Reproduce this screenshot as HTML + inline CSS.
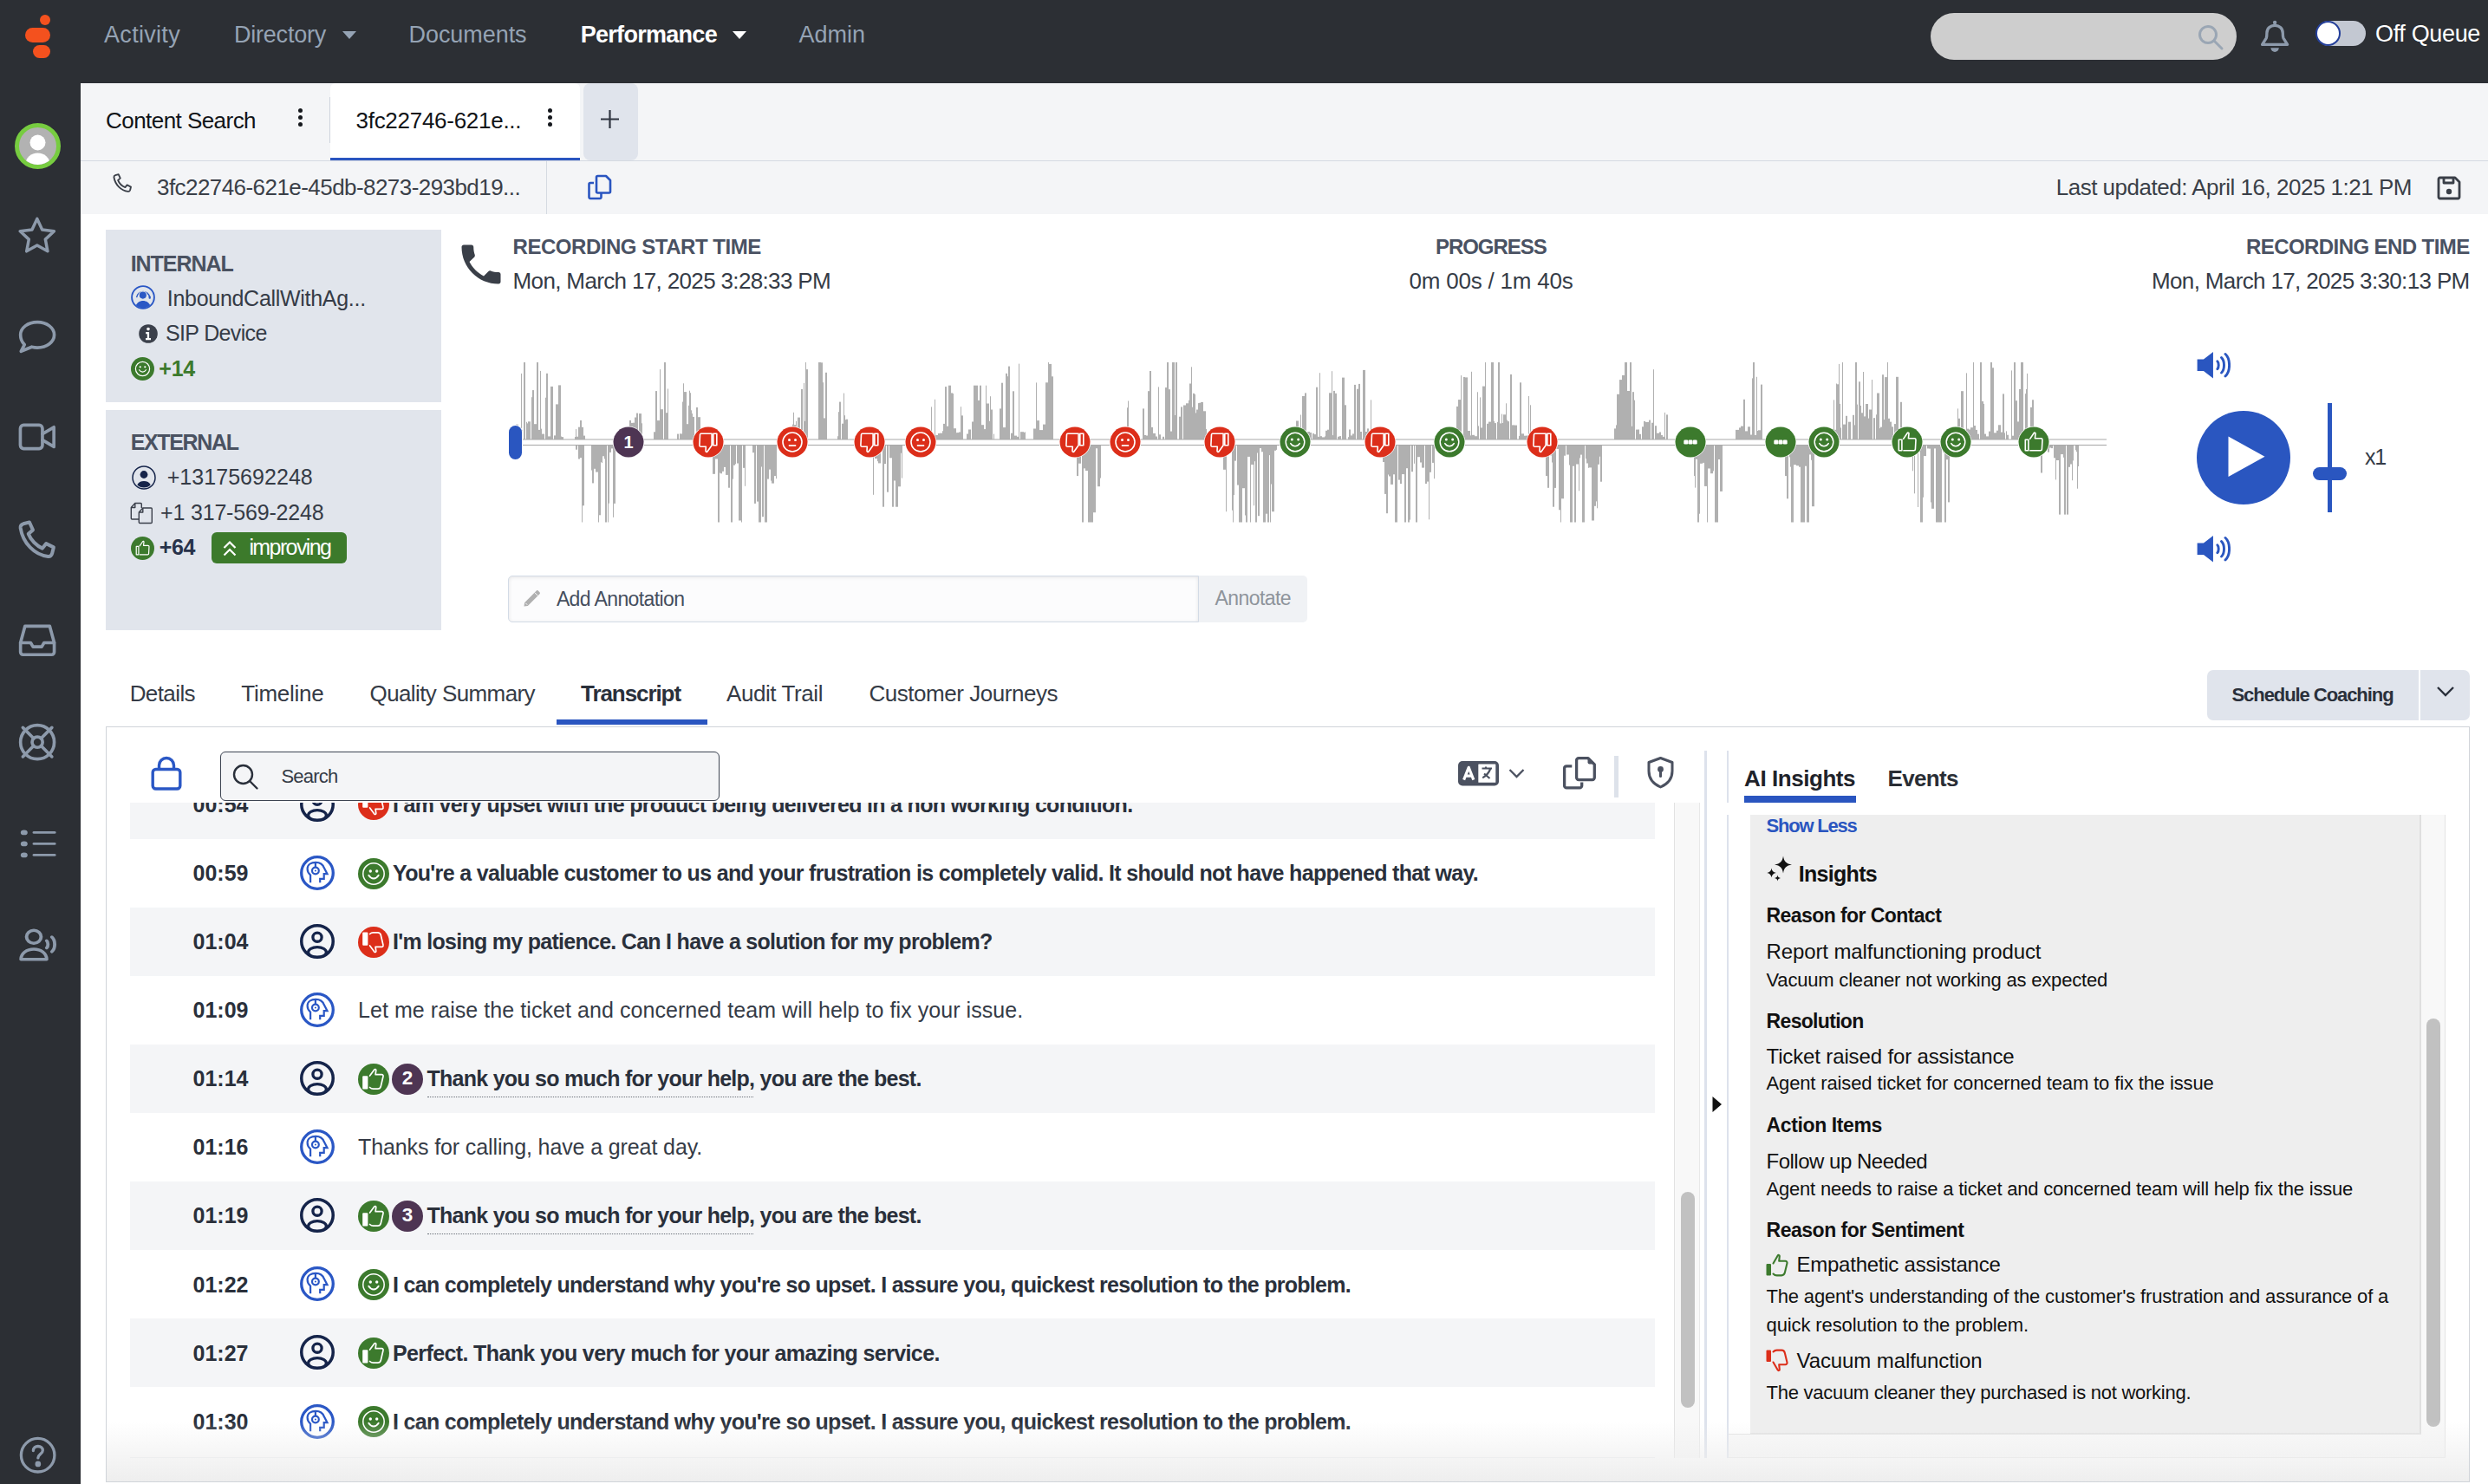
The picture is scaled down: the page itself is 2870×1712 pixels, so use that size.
<!DOCTYPE html>
<html><head><meta charset="utf-8"><style>*{box-sizing:border-box;margin:0;padding:0}
html,body{width:2870px;height:1712px;overflow:hidden;background:#fff;font-family:"Liberation Sans",sans-serif}
.a{position:absolute;white-space:nowrap}</style></head><body>
<div class="a" style="left:0px;top:0px;width:2870px;height:96px;background:#2c2f34;"></div>
<div class="a" style="left:0px;top:0px;width:93px;height:1712px;background:#2c2f34;"></div>
<div class="a" style="left:46px;top:17px;width:12px;height:12px;background:#f4511e;border-radius:6px"></div>
<div class="a" style="left:29px;top:32px;width:29px;height:17px;background:#f4511e;border-radius:8.5px"></div>
<div class="a" style="left:38px;top:52px;width:20px;height:15px;background:#f4511e;border-radius:7.5px"></div>
<div class="a" style="left:120.0px;top:27.1px;font-size:27px;line-height:27px;color:#95a3b4;letter-spacing:0.311px;">Activity</div>
<div class="a" style="left:270.0px;top:27.1px;font-size:27px;line-height:27px;color:#95a3b4;letter-spacing:-0.223px;">Directory</div>
<svg class="a" style="left:394.6px;top:36px;" width="16" height="9" viewBox="0 0 16 9"><path d="M0 0h16L8 9z" fill="#95a3b4"/></svg>
<div class="a" style="left:471.5px;top:27.1px;font-size:27px;line-height:27px;color:#95a3b4;letter-spacing:-0.061px;">Documents</div>
<div class="a" style="left:669.7px;top:27.1px;font-size:27px;line-height:27px;color:#fff;font-weight:bold;letter-spacing:-0.706px;">Performance</div>
<svg class="a" style="left:844.7px;top:36px;" width="16" height="9" viewBox="0 0 16 9"><path d="M0 0h16L8 9z" fill="#fff"/></svg>
<div class="a" style="left:921.6px;top:27.1px;font-size:27px;line-height:27px;color:#95a3b4;letter-spacing:-0.006px;">Admin</div>
<div class="a" style="left:2227px;top:15px;width:353px;height:54px;background:#cecece;border-radius:27px"></div>
<svg class="a" style="left:2534px;top:27px;" width="32" height="32" viewBox="0 0 32 32"><g fill="none" stroke="#9aa6b4" stroke-width="3"><circle cx="13" cy="13" r="9.5"/><path d="M20 20l9 9" stroke-linecap="round"/></g></svg>
<svg class="a" style="left:2596px;top:14px;" width="60" height="60" viewBox="0 0 60 60"><path d="M13.6 37.4l4.7-7.6c.5-1.6.6-3.8.6-5.6 0-5.3 3.8-8.9 9.2-8.9s9.2 3.6 9.2 8.9c0 1.8.1 4 .6 5.6l4.7 7.6z" fill="none" stroke="#8d9aab" stroke-width="3.3" stroke-linejoin="round"/><circle cx="28.1" cy="12" r="2.2" fill="#8d9aab"/><path d="M23.4 41.2h9.4a4.7 4.7 0 0 1-9.4 0z" fill="#8d9aab"/></svg>
<div class="a" style="left:2672px;top:24px;width:57px;height:29px;background:#c3c8d2;border-radius:14.5px"></div>
<div class="a" style="left:2671px;top:24px;width:29px;height:29px;background:#fff;border-radius:50%;border:2.5px solid #243f9a"></div>
<div class="a" style="left:2740.0px;top:25.8px;font-size:27px;line-height:27px;color:#fff;letter-spacing:-0.341px;">Off Queue</div>
<svg class="a" style="left:17px;top:142px;" width="53" height="53" viewBox="0 0 53 53"><circle cx="26.5" cy="26.5" r="24" fill="#b2b2b2" stroke="#77cc40" stroke-width="5"/><defs><clipPath id="avc"><circle cx="26.5" cy="26.5" r="21.5"/></clipPath></defs><circle cx="26.5" cy="22.5" r="9" fill="#fff"/><ellipse cx="26.5" cy="47" rx="14" ry="12.4" fill="#fff" clip-path="url(#avc)"/></svg>
<svg class="a" style="left:19.36px;top:247.71px" width="47.63" height="48.0" viewBox="0 0 24 24" preserveAspectRatio="none"><g fill="none" stroke="#8d9aab" stroke-width="1.75" stroke-linecap="round" stroke-linejoin="round"><path d="M12 2.2l2.95 6.3 6.9.85-5.05 4.7 1.3 6.85L12 17.5l-6.1 3.4 1.3-6.85-5.05-4.7 6.9-.85z"/></g></svg>
<svg class="a" style="left:18.06px;top:363.82px" width="50.21" height="50.53" viewBox="0 0 24 24" preserveAspectRatio="none"><g fill="none" stroke="#8d9aab" stroke-width="1.75" stroke-linecap="round" stroke-linejoin="round"><path d="M12 3.6c5.2 0 9.3 3.1 9.3 7s-4.1 7-9.3 7c-1.1 0-2.1-.15-3.1-.4L3 19.6l1.9-3.6C3.6 14.7 2.7 12.8 2.7 10.6c0-3.9 4.1-7 9.3-7z"/></g></svg>
<svg class="a" style="left:18.06px;top:477.16px" width="50.21" height="53.58" viewBox="0 0 24 24" preserveAspectRatio="none"><g fill="none" stroke="#8d9aab" stroke-width="1.75" stroke-linecap="round" stroke-linejoin="round"><rect x="2.6" y="6" width="12.2" height="12.2" rx="1.8"/><path d="M14.8 10.6l6.3-3.5v10.1l-6.3-3.5"/></g></svg>
<svg class="a" style="left:15.19px;top:598.08px" width="54.64" height="56.42" viewBox="0 0 24 24" preserveAspectRatio="none"><g fill="none" stroke="#8d9aab" stroke-width="1.75" stroke-linecap="round" stroke-linejoin="round"><path d="M5.2 2.7l3.1-.8 1.8 3.8-2.3 1.9c1.2 3 4.1 5.9 7.1 7.1l1.9-2.3 3.8 1.8-.8 3.1c-.3.9-1.1 1.5-2 1.4C10.9 18 5 12.1 3.8 4.7c-.1-.9.5-1.7 1.4-2z"/></g></svg>
<svg class="a" style="left:18.06px;top:713.6px" width="50.21" height="50.04" viewBox="0 0 24 24" preserveAspectRatio="none"><g fill="none" stroke="#8d9aab" stroke-width="1.75" stroke-linecap="round" stroke-linejoin="round"><path d="M2.7 13.2L5.2 4h13.6l2.5 9.2v5.2a1.4 1.4 0 0 1-1.4 1.4H4.1a1.4 1.4 0 0 1-1.4-1.4z"/><path d="M2.7 13.2h5.6l1.3 2.2h4.8l1.3-2.2h5.6"/></g></svg>
<svg class="a" style="left:18.06px;top:831.19px" width="50.21" height="50.32" viewBox="0 0 24 24" preserveAspectRatio="none"><g fill="none" stroke="#8d9aab" stroke-width="1.75" stroke-linecap="round" stroke-linejoin="round"><circle cx="12" cy="12" r="9.3"/><circle cx="12" cy="12" r="2.9"/><path d="M4 4l5.9 5.9M20 4l-5.9 5.9M4 20l5.9-5.9M20 20l-5.9-5.9"/></g></svg>
<svg class="a" style="left:18.31px;top:954.81px" width="51.22" height="37.19" viewBox="0 0 24 24" preserveAspectRatio="none"><g fill="none" stroke="#8d9aab" stroke-width="1.75" stroke-linecap="round" stroke-linejoin="round"><path d="M10 3.5h11M10 11.9h11M10 20.3h11"/><circle cx="4.6" cy="3.5" r="1" fill="#8d9aab"/><circle cx="4.6" cy="11.9" r="1" fill="#8d9aab"/><circle cx="4.6" cy="20.3" r="1" fill="#8d9aab"/></g></svg>
<svg class="a" style="left:17.85px;top:1068.41px" width="53.07" height="47.17" viewBox="0 0 24 24" preserveAspectRatio="none"><g fill="none" stroke="#8d9aab" stroke-width="1.75" stroke-linecap="round" stroke-linejoin="round"><circle cx="9.5" cy="6.5" r="3.8"/><path d="M2.8 19.7c0-3.5 3-6 6.7-6s6.7 2.5 6.7 6z"/><path d="M16.2 8.8c.9.9.9 3.3 0 4.2M18.9 6.6c2 2 2 6.6 0 8.6"/></g></svg>
<svg class="a" style="left:20.64px;top:1655.64px" width="45.31" height="45.41" viewBox="0 0 24 24" preserveAspectRatio="none"><g fill="none" stroke="#8d9aab" stroke-width="1.75" stroke-linecap="round" stroke-linejoin="round"><circle cx="12" cy="12" r="10.2"/><path d="M9.2 9.3c0-1.7 1.3-2.7 2.9-2.7 1.7 0 2.9 1 2.9 2.5 0 2.1-2.9 2.5-2.9 4.6"/><circle cx="12.1" cy="17.4" r=".9" fill="#8d9aab"/></g></svg>
<div class="a" style="left:93px;top:96px;width:2777px;height:89px;background:#f4f5f7;"></div>
<div class="a" style="left:93px;top:185px;width:2777px;height:1px;background:#d5dae2;"></div>
<div class="a" style="left:93px;top:186px;width:2777px;height:61px;background:#f4f5f7;"></div>
<div class="a" style="left:122.0px;top:126.0px;font-size:26px;line-height:26px;color:#111418;letter-spacing:-0.547px;">Content Search</div>
<div class="a" style="left:343.8px;top:124.8px;width:5.4px;height:5.4px;background:#15181d;border-radius:50%"></div>
<div class="a" style="left:343.8px;top:132.70000000000002px;width:5.4px;height:5.4px;background:#15181d;border-radius:50%"></div>
<div class="a" style="left:343.8px;top:140.60000000000002px;width:5.4px;height:5.4px;background:#15181d;border-radius:50%"></div>
<div class="a" style="left:631.6999999999999px;top:124.8px;width:5.4px;height:5.4px;background:#15181d;border-radius:50%"></div>
<div class="a" style="left:631.6999999999999px;top:132.70000000000002px;width:5.4px;height:5.4px;background:#15181d;border-radius:50%"></div>
<div class="a" style="left:631.6999999999999px;top:140.60000000000002px;width:5.4px;height:5.4px;background:#15181d;border-radius:50%"></div>
<div class="a" style="left:380px;top:112px;width:1px;height:53px;background:#cfd5de;"></div>
<div class="a" style="left:381px;top:96px;width:288px;height:89px;background:#fff;border-radius:6px 6px 0 0"></div>
<div class="a" style="left:381px;top:182px;width:288px;height:3px;background:#2a55c0;"></div>
<div class="a" style="left:410.5px;top:126.2px;font-size:26px;line-height:26px;color:#111418;letter-spacing:-0.277px;">3fc22746-621e...</div>
<div class="a" style="left:631.6999999999999px;top:124.8px;width:5.4px;height:5.4px;background:#15181d;border-radius:50%"></div>
<div class="a" style="left:631.6999999999999px;top:132.70000000000002px;width:5.4px;height:5.4px;background:#15181d;border-radius:50%"></div>
<div class="a" style="left:631.6999999999999px;top:140.60000000000002px;width:5.4px;height:5.4px;background:#15181d;border-radius:50%"></div>
<div class="a" style="left:673px;top:96px;width:63px;height:88.5px;background:#e0e4ec;border-radius:8px"></div>
<svg class="a" style="left:692px;top:126px;" width="23" height="23" viewBox="0 0 23 23"><path d="M11.5 1v21M1 11.5h21" stroke="#2f3540" stroke-width="2.2"/></svg>
<svg class="a" style="left:127px;top:199px;" width="28" height="28" viewBox="0 0 24 24"><path d="M5.2 2.7l3.1-.8 1.8 3.8-2.3 1.9c1.2 3 4.1 5.9 7.1 7.1l1.9-2.3 3.8 1.8-.8 3.1c-.3.9-1.1 1.5-2 1.4C10.9 18 5 12.1 3.8 4.7c-.1-.9.5-1.7 1.4-2z" fill="none" stroke="#3a3f48" stroke-width="1.6" stroke-linejoin="round"/></svg>
<div class="a" style="left:181.0px;top:203.0px;font-size:26px;line-height:26px;color:#3a3f48;letter-spacing:-0.558px;">3fc22746-621e-45db-8273-293bd19...</div>
<div class="a" style="left:630px;top:186px;width:1px;height:61px;background:#d5dae2;"></div>
<svg class="a" style="left:677px;top:201px;" width="30" height="30" viewBox="0 0 30 30"><g fill="none" stroke="#2a55c0" stroke-width="2.6" stroke-linejoin="round"><path d="M8 10H4a1.5 1.5 0 0 0-1.5 1.5v15A1.5 1.5 0 0 0 4 28h11a1.5 1.5 0 0 0 1.5-1.5V22"/><path d="M11 3.5A1.5 1.5 0 0 1 12.5 2h9.5l5 5v13a1.5 1.5 0 0 1-1.5 1.5h-13A1.5 1.5 0 0 1 11 20z"/></g></svg>
<div class="a" style="left:2371.7px;top:203.0px;font-size:26px;line-height:26px;color:#3a3f48;letter-spacing:-0.487px;">Last updated: April 16, 2025 1:21 PM</div>
<svg class="a" style="left:2809px;top:201px;" width="32" height="32" viewBox="0 0 32 32"><g fill="none" stroke="#3a3f48" stroke-width="2.8" stroke-linejoin="round"><path d="M4 5.5A1.5 1.5 0 0 1 5.5 4h17.5l5 5v17.5a1.5 1.5 0 0 1-1.5 1.5h-21A1.5 1.5 0 0 1 4 26.5z"/><path d="M10 4v6h11V4"/></g><circle cx="16" cy="20" r="3.2" fill="#3a3f48"/></svg>
<div class="a" style="left:122px;top:265px;width:387px;height:199px;background:#e1e5ec;"></div>
<div class="a" style="left:122px;top:473px;width:387px;height:254px;background:#e1e5ec;"></div>
<div class="a" style="left:150.7px;top:291.8px;font-size:25px;line-height:25px;color:#4a5261;font-weight:bold;letter-spacing:-1.047px;">INTERNAL</div>
<svg class="a" style="left:151px;top:329px;" width="28" height="28" viewBox="0 0 28 28"><circle cx="14" cy="14" r="12.9" fill="none" stroke="#2a57c5" stroke-width="1.9"/><defs><clipPath id="agc"><circle cx="14" cy="14" r="12.2"/></clipPath></defs><path d="M6.6 14.2A7.6 7.6 0 0 1 21.6 13.6" fill="none" stroke="#2a57c5" stroke-width="1.4"/><circle cx="13.8" cy="11.6" r="4.6" fill="#2a57c5" stroke="#e1e5ec" stroke-width="1.1"/><rect x="20.6" y="12.6" width="2.2" height="3.2" rx="0.8" fill="#2a57c5"/><path d="M5.8 23.5c1.2-3.5 4.4-5.6 8.2-5.6s7 2.1 8.2 5.6V28H5.8z" fill="#2a57c5" clip-path="url(#agc)"/></svg>
<div class="a" style="left:192.8px;top:331.7px;font-size:25px;line-height:25px;color:#353b46;letter-spacing:-0.292px;">InboundCallWithAg...</div>
<svg class="a" style="left:159.7px;top:374px;" width="22" height="22" viewBox="0 0 22 22"><circle cx="11" cy="11" r="10.8" fill="#3b404b"/><circle cx="11" cy="5.6" r="1.8" fill="#fff"/><path d="M8.2 9h3.9v7h1.9v2.2H8v-2.2h1.8v-4.8H8.2z" fill="#fff"/></svg>
<div class="a" style="left:191.0px;top:371.5px;font-size:25px;line-height:25px;color:#353b46;letter-spacing:-0.650px;">SIP Device</div>
<svg class="a" style="left:151px;top:412px;" width="27" height="27" viewBox="0 0 36 36"><circle cx="18" cy="18" r="18" fill="#3c7a2d"/><circle cx="18" cy="18" r="10.8" fill="none" stroke="#fff" stroke-width="1.6"/><circle cx="14.3" cy="15" r="1.5" fill="#fff"/><circle cx="21.7" cy="15" r="1.5" fill="#fff"/><path d="M12.8 19.6c1.4 2.2 3.2 3.2 5.2 3.2s3.8-1 5.2-3.2" fill="none" stroke="#fff" stroke-width="1.6" stroke-linecap="round"/></svg>
<div class="a" style="left:183.3px;top:412.6px;font-size:25px;line-height:25px;color:#3c7a2d;font-weight:bold;letter-spacing:-0.235px;">+14</div>
<div class="a" style="left:150.7px;top:498.2px;font-size:25px;line-height:25px;color:#4a5261;font-weight:bold;letter-spacing:-1.341px;">EXTERNAL</div>
<svg class="a" style="left:151.5px;top:536.5px;" width="28" height="28" viewBox="0 0 28 28"><circle cx="14" cy="14" r="13" fill="none" stroke="#15244a" stroke-width="1.5"/><circle cx="14" cy="10.5" r="4.4" fill="#15244a"/><path d="M6.3 22.3c1.2-2.9 4.2-4.3 7.7-4.3s6.5 1.4 7.7 4.3C19.8 24.4 17.1 25.6 14 25.6s-5.8-1.2-7.7-3.3z" fill="#15244a"/></svg>
<div class="a" style="left:192.7px;top:537.6px;font-size:25px;line-height:25px;color:#353b46;letter-spacing:0.048px;">+13175692248</div>
<svg class="a" style="left:150px;top:578px;" width="27" height="27" viewBox="0 0 27 27"><g fill="none" stroke="#3a3f4a" stroke-width="1.4" stroke-linejoin="round"><path d="M1.3 20V7.5l4.5-5h6.5c.6 0 1 .4 1 1V8"/><path d="M1.3 7.5h4.5v-5"/><path d="M10.3 24.5V13l4.5-5h9.5c.6 0 1 .4 1 1v15.5c0 .6-.4 1-1 1h-13c-.6 0-1-.4-1-1z"/><path d="M10.3 13h4.5V8"/><path d="M1.3 20c0 .6.4 1 1 1h8"/></g></svg>
<div class="a" style="left:185.0px;top:578.6px;font-size:25px;line-height:25px;color:#353b46;letter-spacing:-0.175px;">+1 317-569-2248</div>
<svg class="a" style="left:151px;top:619px;" width="27" height="27" viewBox="0 0 36 36"><circle cx="18" cy="18" r="18" fill="#3c7a2d"/><g fill="none" stroke="#fff" stroke-width="1.6" stroke-linejoin="round"><path d="M13.3 27.7h12.4c1.1 0 1.7-.6 1.7-1.5l.6-10.8c0-1-.6-1.6-1.6-1.6h-7l.6-5.6c.1-1.1-1.3-1.4-1.9-.5l-4.8 7.2"/><path d="M8.3 15.2h3.6v12.5H8.3z"/></g></svg>
<div class="a" style="left:183.7px;top:618.6px;font-size:25px;line-height:25px;color:#27324a;font-weight:bold;letter-spacing:-0.369px;">+64</div>
<div class="a" style="left:244px;top:614px;width:156px;height:36px;background:#3c7a2b;border-radius:6px"></div>
<svg class="a" style="left:257px;top:623px;" width="16" height="19" viewBox="0 0 16 19"><path d="M1.5 9L8 2.5 14.5 9M1.5 17.5L8 11l6.5 6.5" fill="none" stroke="#fff" stroke-width="2.2"/></svg>
<div class="a" style="left:287.4px;top:618.6px;font-size:25px;line-height:25px;color:#fff;letter-spacing:-1.596px;">improving</div>
<svg class="a" style="left:524.5px;top:274.5px;" width="60" height="60" viewBox="0 0 24 24"><path d="M6.6 10.8c1.4 2.8 3.8 5.1 6.6 6.6l2.2-2.2c.3-.3.7-.4 1-.2 1.1.4 2.3.6 3.6.6.6 0 1 .4 1 1V20c0 .6-.4 1-1 1C10.6 21 3 13.4 3 4c0-.6.4-1 1-1h3.5c.6 0 1 .4 1 1 0 1.3.2 2.5.6 3.6.1.3 0 .7-.2 1z" fill="#3a3f48" transform="rotate(0 12 12)"/></svg>
<div class="a" style="left:591.6px;top:272.7px;font-size:24px;line-height:24px;color:#4a5263;font-weight:bold;letter-spacing:-0.467px;">RECORDING START TIME</div>
<div class="a" style="left:591.6px;top:311.0px;font-size:26px;line-height:26px;color:#353b46;letter-spacing:-0.649px;">Mon, March 17, 2025 3:28:33 PM</div>
<div class="a" style="left:1656.0px;top:272.7px;font-size:24px;line-height:24px;color:#4a5263;font-weight:bold;letter-spacing:-1.054px;">PROGRESS</div>
<div class="a" style="left:1625.6px;top:311.0px;font-size:26px;line-height:26px;color:#353b46;letter-spacing:-0.219px;">0m 00s / 1m 40s</div>
<div class="a" style="left:2591.0px;top:272.7px;font-size:24px;line-height:24px;color:#4a5263;font-weight:bold;letter-spacing:-0.578px;">RECORDING END TIME</div>
<div class="a" style="left:2482.0px;top:311.0px;font-size:26px;line-height:26px;color:#353b46;letter-spacing:-0.642px;">Mon, March 17, 2025 3:30:13 PM</div>
<svg class="a" style="left:0;top:0" width="2870" height="700" viewBox="0 0 2870 700"><g fill="#b0b0b0"><rect x="595" y="489.6" width="3" height="17.4"/><rect x="598" y="499.0" width="2" height="8.0"/><rect x="601" y="430.9" width="1" height="76.1"/><rect x="602" y="496.2" width="1" height="10.8"/><rect x="604" y="418.0" width="2" height="89.0"/><rect x="607" y="486.8" width="1" height="20.2"/><rect x="608" y="488.4" width="1" height="18.6"/><rect x="609" y="486.3" width="3" height="20.7"/><rect x="613" y="458.2" width="1" height="48.8"/><rect x="614" y="450.1" width="2" height="56.9"/><rect x="616" y="489.2" width="3" height="17.8"/><rect x="619" y="418.0" width="2" height="89.0"/><rect x="621" y="495.9" width="2" height="11.1"/><rect x="623" y="427.9" width="1" height="79.1"/><rect x="624" y="494.6" width="1" height="12.4"/><rect x="625" y="500.6" width="3" height="6.4"/><rect x="629" y="458.7" width="1" height="48.3"/><rect x="630" y="430.8" width="2" height="76.2"/><rect x="632" y="503.4" width="3" height="3.6"/><rect x="635" y="445.9" width="3" height="61.1"/><rect x="639" y="502.4" width="2" height="4.6"/><rect x="641" y="466.4" width="3" height="40.6"/><rect x="644" y="444.4" width="3" height="62.6"/><rect x="647" y="503.5" width="1" height="3.5"/><rect x="648" y="504.1" width="2" height="2.9"/><rect x="663" y="504.0" width="1" height="3.0"/><rect x="664" y="495.1" width="1" height="11.9"/><rect x="665" y="503.7" width="2" height="3.3"/><rect x="667" y="492.7" width="2" height="14.3"/><rect x="669" y="485.0" width="2" height="22.0"/><rect x="671" y="492.8" width="2" height="14.2"/><rect x="673" y="502.6" width="2" height="4.4"/><rect x="726" y="484.9" width="2" height="22.1"/><rect x="728" y="487.9" width="2" height="19.1"/><rect x="730" y="487.7" width="2" height="19.3"/><rect x="732" y="481.5" width="2" height="25.5"/><rect x="734" y="476.6" width="2" height="30.4"/><rect x="737" y="477.1" width="3" height="29.9"/><rect x="740" y="488.3" width="1" height="18.7"/><rect x="754" y="498.3" width="2" height="8.7"/><rect x="756" y="451.1" width="2" height="55.9"/><rect x="758" y="485.1" width="3" height="21.9"/><rect x="761" y="426.1" width="1" height="80.9"/><rect x="762" y="472.2" width="3" height="34.8"/><rect x="766" y="418.0" width="2" height="89.0"/><rect x="768" y="476.2" width="2" height="30.8"/><rect x="770" y="448.5" width="1" height="58.5"/><rect x="781" y="500.6" width="2" height="6.4"/><rect x="784" y="500.2" width="1" height="6.8"/><rect x="785" y="500.4" width="2" height="6.6"/><rect x="787" y="463.5" width="1" height="43.5"/><rect x="788" y="442.3" width="1" height="64.7"/><rect x="789" y="452.1" width="3" height="54.9"/><rect x="792" y="489.2" width="2" height="17.8"/><rect x="794" y="467.8" width="1" height="39.2"/><rect x="795" y="450.7" width="1" height="56.3"/><rect x="796" y="453.2" width="1" height="53.8"/><rect x="797" y="473.3" width="1" height="33.7"/><rect x="798" y="477.0" width="1" height="30.0"/><rect x="799" y="480.9" width="2" height="26.1"/><rect x="803" y="470.0" width="2" height="37.0"/><rect x="805" y="481.2" width="3" height="25.8"/><rect x="914" y="489.6" width="1" height="17.4"/><rect x="915" y="475.8" width="1" height="31.2"/><rect x="916" y="490.2" width="2" height="16.8"/><rect x="918" y="485.8" width="1" height="21.2"/><rect x="920" y="481.6" width="3" height="25.4"/><rect x="924" y="449.0" width="2" height="58.0"/><rect x="927" y="441.9" width="1" height="65.1"/><rect x="928" y="485.8" width="1" height="21.2"/><rect x="929" y="418.0" width="1" height="89.0"/><rect x="930" y="426.1" width="2" height="80.9"/><rect x="944" y="418.0" width="1" height="89.0"/><rect x="945" y="418.0" width="1" height="89.0"/><rect x="946" y="418.0" width="1" height="89.0"/><rect x="947" y="418.3" width="2" height="88.7"/><rect x="949" y="441.2" width="1" height="65.8"/><rect x="950" y="482.4" width="2" height="24.6"/><rect x="952" y="429.8" width="2" height="77.2"/><rect x="966" y="503.2" width="1" height="3.8"/><rect x="967" y="475.2" width="1" height="31.8"/><rect x="968" y="463.6" width="2" height="43.4"/><rect x="971" y="488.7" width="2" height="18.3"/><rect x="973" y="453.6" width="1" height="53.4"/><rect x="974" y="479.2" width="1" height="27.8"/><rect x="975" y="484.2" width="1" height="22.8"/><rect x="976" y="483.7" width="2" height="23.3"/><rect x="1067" y="502.6" width="2" height="4.4"/><rect x="1070" y="499.7" width="2" height="7.3"/><rect x="1072" y="502.3" width="2" height="4.7"/><rect x="1074" y="469.4" width="1" height="37.6"/><rect x="1075" y="504.9" width="1" height="2.1"/><rect x="1076" y="504.5" width="2" height="2.5"/><rect x="1078" y="460.8" width="1" height="46.2"/><rect x="1079" y="502.0" width="3" height="5.0"/><rect x="1082" y="500.0" width="2" height="7.0"/><rect x="1084" y="499.7" width="3" height="7.3"/><rect x="1087" y="497.2" width="1" height="9.8"/><rect x="1088" y="488.9" width="2" height="18.1"/><rect x="1090" y="446.1" width="2" height="60.9"/><rect x="1092" y="491.7" width="2" height="15.3"/><rect x="1094" y="444.7" width="3" height="62.3"/><rect x="1097" y="453.4" width="2" height="53.6"/><rect x="1099" y="454.0" width="1" height="53.0"/><rect x="1100" y="494.2" width="3" height="12.8"/><rect x="1103" y="499.2" width="1" height="7.8"/><rect x="1104" y="499.1" width="2" height="7.9"/><rect x="1106" y="498.5" width="2" height="8.5"/><rect x="1108" y="469.2" width="1" height="37.8"/><rect x="1109" y="479.4" width="2" height="27.6"/><rect x="1115" y="500.5" width="2" height="6.5"/><rect x="1117" y="495.5" width="3" height="11.5"/><rect x="1121" y="486.5" width="2" height="20.5"/><rect x="1123" y="444.7" width="2" height="62.3"/><rect x="1125" y="444.7" width="3" height="62.3"/><rect x="1128" y="461.9" width="2" height="45.1"/><rect x="1130" y="444.7" width="2" height="62.3"/><rect x="1132" y="490.2" width="3" height="16.8"/><rect x="1135" y="495.1" width="2" height="11.9"/><rect x="1137" y="444.7" width="1" height="62.3"/><rect x="1138" y="465.5" width="3" height="41.5"/><rect x="1141" y="485.8" width="1" height="21.2"/><rect x="1142" y="457.2" width="1" height="49.8"/><rect x="1143" y="472.5" width="2" height="34.5"/><rect x="1146" y="500.6" width="1" height="6.4"/><rect x="1153" y="471.4" width="2" height="35.6"/><rect x="1155" y="441.7" width="2" height="65.3"/><rect x="1157" y="493.1" width="3" height="13.9"/><rect x="1160" y="430.8" width="2" height="76.2"/><rect x="1162" y="434.2" width="1" height="72.8"/><rect x="1163" y="422.6" width="2" height="84.4"/><rect x="1166" y="499.7" width="2" height="7.3"/><rect x="1168" y="451.3" width="2" height="55.7"/><rect x="1170" y="502.6" width="3" height="4.4"/><rect x="1173" y="503.8" width="2" height="3.2"/><rect x="1175" y="419.6" width="1" height="87.4"/><rect x="1177" y="498.2" width="2" height="8.8"/><rect x="1179" y="498.2" width="2" height="8.8"/><rect x="1181" y="498.9" width="1" height="8.1"/><rect x="1182" y="498.4" width="1" height="8.6"/><rect x="1192" y="494.5" width="3" height="12.5"/><rect x="1195" y="441.4" width="1" height="65.6"/><rect x="1196" y="485.1" width="3" height="21.9"/><rect x="1199" y="496.1" width="2" height="10.9"/><rect x="1201" y="496.1" width="2" height="10.9"/><rect x="1203" y="489.6" width="3" height="17.4"/><rect x="1206" y="441.3" width="3" height="65.7"/><rect x="1209" y="418.0" width="1" height="89.0"/><rect x="1210" y="420.0" width="1" height="87.0"/><rect x="1211" y="419.9" width="2" height="87.1"/><rect x="1213" y="434.3" width="2" height="72.7"/><rect x="1298" y="495.4" width="2" height="11.6"/><rect x="1300" y="470.3" width="1" height="36.7"/><rect x="1301" y="462.5" width="1" height="44.5"/><rect x="1302" y="505.3" width="2" height="1.7"/><rect x="1318" y="471.4" width="2" height="35.6"/><rect x="1320" y="502.0" width="2" height="5.0"/><rect x="1322" y="502.5" width="2" height="4.5"/><rect x="1324" y="451.2" width="2" height="55.8"/><rect x="1326" y="428.0" width="2" height="79.0"/><rect x="1328" y="492.9" width="2" height="14.1"/><rect x="1330" y="499.9" width="3" height="7.1"/><rect x="1333" y="503.5" width="2" height="3.5"/><rect x="1336" y="446.4" width="1" height="60.6"/><rect x="1337" y="501.3" width="2" height="5.7"/><rect x="1341" y="503.8" width="2" height="3.2"/><rect x="1344" y="447.1" width="2" height="59.9"/><rect x="1346" y="418.0" width="2" height="89.0"/><rect x="1348" y="449.2" width="2" height="57.8"/><rect x="1350" y="497.6" width="2" height="9.4"/><rect x="1352" y="418.0" width="3" height="89.0"/><rect x="1355" y="479.0" width="1" height="28.0"/><rect x="1356" y="418.0" width="2" height="89.0"/><rect x="1360" y="480.7" width="2" height="26.3"/><rect x="1362" y="469.4" width="2" height="37.6"/><rect x="1365" y="467.5" width="3" height="39.5"/><rect x="1368" y="465.3" width="3" height="41.7"/><rect x="1371" y="461.8" width="1" height="45.2"/><rect x="1372" y="442.5" width="2" height="64.5"/><rect x="1374" y="423.3" width="1" height="83.7"/><rect x="1375" y="469.7" width="1" height="37.3"/><rect x="1376" y="453.8" width="2" height="53.2"/><rect x="1378" y="454.9" width="1" height="52.1"/><rect x="1379" y="476.4" width="1" height="30.6"/><rect x="1380" y="472.5" width="2" height="34.5"/><rect x="1382" y="465.1" width="1" height="41.9"/><rect x="1383" y="464.8" width="2" height="42.2"/><rect x="1385" y="463.9" width="3" height="43.1"/><rect x="1388" y="474.3" width="3" height="32.7"/><rect x="1391" y="495.0" width="1" height="12.0"/><rect x="1494" y="500.1" width="1" height="6.9"/><rect x="1495" y="485.5" width="3" height="21.5"/><rect x="1498" y="492.8" width="2" height="14.2"/><rect x="1500" y="478.5" width="1" height="28.5"/><rect x="1502" y="457.0" width="3" height="50.0"/><rect x="1505" y="453.4" width="2" height="53.6"/><rect x="1508" y="498.0" width="3" height="9.0"/><rect x="1511" y="499.0" width="2" height="8.0"/><rect x="1514" y="500.1" width="2" height="6.9"/><rect x="1516" y="501.1" width="2" height="5.9"/><rect x="1518" y="446.7" width="2" height="60.3"/><rect x="1520" y="503.8" width="2" height="3.2"/><rect x="1522" y="430.2" width="1" height="76.8"/><rect x="1523" y="503.2" width="2" height="3.8"/><rect x="1525" y="504.4" width="3" height="2.6"/><rect x="1528" y="503.4" width="1" height="3.6"/><rect x="1529" y="496.8" width="2" height="10.2"/><rect x="1531" y="495.7" width="2" height="11.3"/><rect x="1533" y="453.3" width="3" height="53.7"/><rect x="1536" y="428.2" width="1" height="78.8"/><rect x="1537" y="502.1" width="1" height="4.9"/><rect x="1538" y="450.9" width="2" height="56.1"/><rect x="1540" y="453.8" width="2" height="53.2"/><rect x="1543" y="503.7" width="2" height="3.3"/><rect x="1545" y="503.1" width="2" height="3.9"/><rect x="1548" y="435.6" width="3" height="71.4"/><rect x="1551" y="467.3" width="2" height="39.7"/><rect x="1555" y="504.2" width="1" height="2.8"/><rect x="1556" y="495.5" width="2" height="11.5"/><rect x="1558" y="502.4" width="2" height="4.6"/><rect x="1560" y="500.4" width="2" height="6.6"/><rect x="1562" y="443.9" width="2" height="63.1"/><rect x="1565" y="448.7" width="2" height="58.3"/><rect x="1567" y="442.9" width="2" height="64.1"/><rect x="1569" y="498.0" width="2" height="9.0"/><rect x="1572" y="426.9" width="3" height="80.1"/><rect x="1575" y="498.0" width="2" height="9.0"/><rect x="1577" y="494.4" width="2" height="12.6"/><rect x="1579" y="497.5" width="2" height="9.5"/><rect x="1581" y="461.4" width="1" height="45.6"/><rect x="1583" y="504.5" width="2" height="2.5"/><rect x="1585" y="504.1" width="2" height="2.9"/><rect x="1678" y="499.3" width="2" height="7.7"/><rect x="1680" y="468.9" width="2" height="38.1"/><rect x="1682" y="461.1" width="3" height="45.9"/><rect x="1685" y="433.1" width="1" height="73.9"/><rect x="1686" y="502.8" width="2" height="4.2"/><rect x="1688" y="435.0" width="2" height="72.0"/><rect x="1690" y="435.4" width="3" height="71.6"/><rect x="1693" y="497.0" width="3" height="10.0"/><rect x="1696" y="502.4" width="1" height="4.6"/><rect x="1697" y="428.8" width="1" height="78.2"/><rect x="1698" y="501.8" width="3" height="5.2"/><rect x="1701" y="503.2" width="3" height="3.8"/><rect x="1704" y="452.3" width="1" height="54.7"/><rect x="1705" y="491.4" width="1" height="15.6"/><rect x="1707" y="458.4" width="1" height="48.6"/><rect x="1708" y="493.4" width="2" height="13.6"/><rect x="1710" y="445.6" width="3" height="61.4"/><rect x="1713" y="418.0" width="1" height="89.0"/><rect x="1715" y="488.8" width="2" height="18.2"/><rect x="1717" y="486.6" width="3" height="20.4"/><rect x="1720" y="418.0" width="3" height="89.0"/><rect x="1723" y="485.9" width="1" height="21.1"/><rect x="1724" y="488.1" width="2" height="18.9"/><rect x="1727" y="486.8" width="1" height="20.2"/><rect x="1728" y="418.0" width="2" height="89.0"/><rect x="1730" y="488.4" width="2" height="18.6"/><rect x="1732" y="477.6" width="1" height="29.4"/><rect x="1733" y="488.0" width="1" height="19.0"/><rect x="1734" y="478.3" width="3" height="28.7"/><rect x="1737" y="465.3" width="1" height="41.7"/><rect x="1738" y="484.5" width="1" height="22.5"/><rect x="1739" y="486.1" width="2" height="20.9"/><rect x="1742" y="431.9" width="2" height="75.1"/><rect x="1744" y="490.4" width="3" height="16.6"/><rect x="1747" y="490.6" width="3" height="16.4"/><rect x="1752" y="502.9" width="1" height="4.1"/><rect x="1753" y="441.3" width="2" height="65.7"/><rect x="1755" y="500.3" width="3" height="6.7"/><rect x="1758" y="502.7" width="3" height="4.3"/><rect x="1761" y="502.4" width="2" height="4.6"/><rect x="1763" y="457.0" width="1" height="50.0"/><rect x="1764" y="499.6" width="1" height="7.4"/><rect x="1765" y="467.3" width="1" height="39.7"/><rect x="1766" y="500.6" width="2" height="6.4"/><rect x="1768" y="503.2" width="2" height="3.8"/><rect x="1862" y="494.4" width="2" height="12.6"/><rect x="1864" y="490.4" width="1" height="16.6"/><rect x="1865" y="454.8" width="3" height="52.2"/><rect x="1868" y="438.1" width="3" height="68.9"/><rect x="1871" y="432.9" width="3" height="74.1"/><rect x="1874" y="418.0" width="3" height="89.0"/><rect x="1877" y="451.0" width="3" height="56.0"/><rect x="1880" y="418.0" width="2" height="89.0"/><rect x="1882" y="491.8" width="1" height="15.2"/><rect x="1883" y="452.2" width="2" height="54.8"/><rect x="1885" y="461.7" width="1" height="45.3"/><rect x="1887" y="495.6" width="2" height="11.4"/><rect x="1889" y="495.5" width="2" height="11.5"/><rect x="1891" y="500.8" width="2" height="6.2"/><rect x="1894" y="492.3" width="2" height="14.7"/><rect x="1896" y="486.0" width="2" height="21.0"/><rect x="1898" y="487.0" width="2" height="20.0"/><rect x="1900" y="486.9" width="2" height="20.1"/><rect x="1902" y="484.6" width="2" height="22.4"/><rect x="1905" y="487.7" width="2" height="19.3"/><rect x="1907" y="426.2" width="1" height="80.8"/><rect x="1909" y="491.2" width="2" height="15.8"/><rect x="1911" y="499.7" width="3" height="7.3"/><rect x="1914" y="498.5" width="2" height="8.5"/><rect x="1916" y="501.9" width="2" height="5.1"/><rect x="1918" y="503.8" width="2" height="3.2"/><rect x="1920" y="475.9" width="1" height="31.1"/><rect x="1922" y="478.4" width="2" height="28.6"/><rect x="2002" y="495.9" width="2" height="11.1"/><rect x="2004" y="495.9" width="2" height="11.1"/><rect x="2006" y="493.4" width="2" height="13.6"/><rect x="2008" y="491.6" width="3" height="15.4"/><rect x="2011" y="460.8" width="2" height="46.2"/><rect x="2013" y="497.4" width="3" height="9.6"/><rect x="2016" y="492.3" width="3" height="14.7"/><rect x="2019" y="501.5" width="2" height="5.5"/><rect x="2021" y="436.4" width="1" height="70.6"/><rect x="2022" y="418.0" width="2" height="89.0"/><rect x="2024" y="502.0" width="2" height="5.0"/><rect x="2026" y="434.8" width="1" height="72.2"/><rect x="2027" y="497.0" width="1" height="10.0"/><rect x="2028" y="496.3" width="3" height="10.7"/><rect x="2031" y="443.6" width="2" height="63.4"/><rect x="2109" y="501.2" width="1" height="5.8"/><rect x="2110" y="498.5" width="2" height="8.5"/><rect x="2112" y="500.1" width="3" height="6.9"/><rect x="2115" y="461.4" width="1" height="45.6"/><rect x="2116" y="495.8" width="2" height="11.2"/><rect x="2118" y="442.5" width="1" height="64.5"/><rect x="2119" y="443.3" width="2" height="63.7"/><rect x="2121" y="419.9" width="1" height="87.1"/><rect x="2122" y="465.9" width="1" height="41.1"/><rect x="2123" y="493.4" width="1" height="13.6"/><rect x="2125" y="418.0" width="1" height="89.0"/><rect x="2126" y="489.6" width="3" height="17.4"/><rect x="2129" y="479.8" width="2" height="27.2"/><rect x="2132" y="486.7" width="3" height="20.3"/><rect x="2137" y="478.8" width="2" height="28.2"/><rect x="2139" y="490.4" width="1" height="16.6"/><rect x="2140" y="418.0" width="2" height="89.0"/><rect x="2142" y="466.6" width="1" height="40.4"/><rect x="2144" y="440.3" width="2" height="66.7"/><rect x="2146" y="468.0" width="1" height="39.0"/><rect x="2147" y="476.3" width="2" height="30.7"/><rect x="2149" y="429.0" width="1" height="78.0"/><rect x="2150" y="480.4" width="2" height="26.6"/><rect x="2152" y="466.0" width="3" height="41.0"/><rect x="2155" y="482.6" width="1" height="24.4"/><rect x="2156" y="472.5" width="3" height="34.5"/><rect x="2159" y="438.0" width="1" height="69.0"/><rect x="2161" y="482.2" width="2" height="24.8"/><rect x="2164" y="478.3" width="1" height="28.7"/><rect x="2165" y="453.5" width="3" height="53.5"/><rect x="2168" y="494.1" width="1" height="12.9"/><rect x="2169" y="492.6" width="2" height="14.4"/><rect x="2171" y="432.2" width="2" height="74.8"/><rect x="2173" y="484.1" width="1" height="22.9"/><rect x="2174" y="435.1" width="3" height="71.9"/><rect x="2177" y="418.0" width="1" height="89.0"/><rect x="2178" y="482.8" width="2" height="24.2"/><rect x="2180" y="486.6" width="2" height="20.4"/><rect x="2182" y="492.3" width="2" height="14.7"/><rect x="2185" y="489.1" width="2" height="17.9"/><rect x="2187" y="434.8" width="3" height="72.2"/><rect x="2190" y="499.0" width="2" height="8.0"/><rect x="2192" y="463.8" width="2" height="43.2"/><rect x="2258" y="471.4" width="1" height="35.6"/><rect x="2259" y="482.8" width="2" height="24.2"/><rect x="2261" y="496.4" width="1" height="10.6"/><rect x="2262" y="451.2" width="3" height="55.8"/><rect x="2265" y="499.7" width="3" height="7.3"/><rect x="2268" y="430.4" width="1" height="76.6"/><rect x="2269" y="494.6" width="2" height="12.4"/><rect x="2271" y="495.5" width="2" height="11.5"/><rect x="2273" y="493.2" width="3" height="13.8"/><rect x="2276" y="418.0" width="1" height="89.0"/><rect x="2277" y="491.0" width="2" height="16.0"/><rect x="2279" y="495.9" width="2" height="11.1"/><rect x="2281" y="500.7" width="2" height="6.3"/><rect x="2284" y="418.0" width="2" height="89.0"/><rect x="2286" y="462.9" width="2" height="44.1"/><rect x="2288" y="465.9" width="1" height="41.1"/><rect x="2289" y="500.6" width="2" height="6.4"/><rect x="2291" y="503.4" width="3" height="3.6"/><rect x="2294" y="497.6" width="2" height="9.4"/><rect x="2296" y="418.0" width="2" height="89.0"/><rect x="2298" y="424.3" width="2" height="82.7"/><rect x="2300" y="499.3" width="3" height="7.7"/><rect x="2303" y="496.7" width="2" height="10.3"/><rect x="2305" y="490.3" width="3" height="16.7"/><rect x="2308" y="498.6" width="2" height="8.4"/><rect x="2310" y="454.4" width="2" height="52.6"/><rect x="2312" y="499.4" width="1" height="7.6"/><rect x="2314" y="497.4" width="1" height="9.6"/><rect x="2315" y="501.7" width="2" height="5.3"/><rect x="2320" y="427.4" width="1" height="79.6"/><rect x="2321" y="502.7" width="2" height="4.3"/><rect x="2323" y="418.0" width="2" height="89.0"/><rect x="2325" y="462.2" width="2" height="44.8"/><rect x="2327" y="486.4" width="2" height="20.6"/><rect x="2329" y="449.0" width="2" height="58.0"/><rect x="2331" y="418.0" width="3" height="89.0"/><rect x="2336" y="454.2" width="1" height="52.8"/><rect x="2337" y="449.0" width="1" height="58.0"/><rect x="2338" y="430.9" width="1" height="76.1"/><rect x="2339" y="496.9" width="2" height="10.1"/><rect x="2342" y="469.9" width="2" height="37.1"/><rect x="2344" y="461.3" width="2" height="45.7"/><rect x="664" y="513.5" width="2" height="5.2"/><rect x="667" y="513.5" width="2" height="16.0"/><rect x="669" y="513.5" width="2" height="14.6"/><rect x="671" y="513.5" width="1" height="89.0"/><rect x="672" y="513.5" width="2" height="69.8"/><rect x="682" y="513.5" width="1" height="29.1"/><rect x="683" y="513.5" width="2" height="43.9"/><rect x="685" y="513.5" width="2" height="27.3"/><rect x="687" y="513.5" width="3" height="31.1"/><rect x="690" y="513.5" width="1" height="89.0"/><rect x="691" y="513.5" width="2" height="80.8"/><rect x="693" y="513.5" width="1" height="19.7"/><rect x="694" y="513.5" width="1" height="20.6"/><rect x="695" y="513.5" width="2" height="12.8"/><rect x="697" y="513.5" width="1" height="15.9"/><rect x="698" y="513.5" width="2" height="89.0"/><rect x="701" y="513.5" width="1" height="89.0"/><rect x="702" y="513.5" width="1" height="67.2"/><rect x="703" y="513.5" width="2" height="8.4"/><rect x="705" y="513.5" width="2" height="3.9"/><rect x="707" y="513.5" width="1" height="83.3"/><rect x="708" y="513.5" width="2" height="67.4"/><rect x="822" y="513.5" width="3" height="33.3"/><rect x="825" y="513.5" width="3" height="15.9"/><rect x="828" y="513.5" width="2" height="89.0"/><rect x="830" y="513.5" width="1" height="32.1"/><rect x="831" y="513.5" width="2" height="32.8"/><rect x="833" y="513.5" width="2" height="30.3"/><rect x="835" y="513.5" width="2" height="25.4"/><rect x="837" y="513.5" width="3" height="34.4"/><rect x="840" y="513.5" width="2" height="49.2"/><rect x="843" y="513.5" width="2" height="89.0"/><rect x="845" y="513.5" width="1" height="39.1"/><rect x="846" y="513.5" width="2" height="23.2"/><rect x="848" y="513.5" width="1" height="21.8"/><rect x="850" y="513.5" width="2" height="21.0"/><rect x="852" y="513.5" width="3" height="87.0"/><rect x="855" y="513.5" width="1" height="89.0"/><rect x="857" y="513.5" width="2" height="26.3"/><rect x="859" y="513.5" width="1" height="47.3"/><rect x="868" y="513.5" width="2" height="8.7"/><rect x="870" y="513.5" width="2" height="67.4"/><rect x="873" y="513.5" width="2" height="65.1"/><rect x="875" y="513.5" width="1" height="89.0"/><rect x="876" y="513.5" width="2" height="89.0"/><rect x="878" y="513.5" width="1" height="25.0"/><rect x="879" y="513.5" width="2" height="82.7"/><rect x="882" y="513.5" width="3" height="89.0"/><rect x="885" y="513.5" width="2" height="39.1"/><rect x="887" y="513.5" width="2" height="28.1"/><rect x="889" y="513.5" width="1" height="41.1"/><rect x="890" y="513.5" width="3" height="44.1"/><rect x="893" y="513.5" width="2" height="35.6"/><rect x="895" y="513.5" width="1" height="38.7"/><rect x="1004" y="513.5" width="3" height="6.2"/><rect x="1007" y="513.5" width="1" height="57.3"/><rect x="1009" y="513.5" width="3" height="15.5"/><rect x="1012" y="513.5" width="1" height="18.7"/><rect x="1013" y="513.5" width="3" height="20.9"/><rect x="1018" y="513.5" width="2" height="71.2"/><rect x="1020" y="513.5" width="2" height="21.6"/><rect x="1023" y="513.5" width="2" height="54.2"/><rect x="1026" y="513.5" width="3" height="14.8"/><rect x="1029" y="513.5" width="2" height="71.2"/><rect x="1031" y="513.5" width="2" height="41.0"/><rect x="1033" y="513.5" width="3" height="71.2"/><rect x="1036" y="513.5" width="3" height="47.8"/><rect x="1039" y="513.5" width="1" height="9.2"/><rect x="1040" y="513.5" width="1" height="38.1"/><rect x="1242" y="513.5" width="2" height="35.6"/><rect x="1244" y="513.5" width="3" height="21.2"/><rect x="1248" y="513.5" width="2" height="89.0"/><rect x="1250" y="513.5" width="2" height="26.9"/><rect x="1252" y="513.5" width="3" height="29.5"/><rect x="1255" y="513.5" width="3" height="89.0"/><rect x="1258" y="513.5" width="3" height="89.0"/><rect x="1261" y="513.5" width="3" height="77.7"/><rect x="1264" y="513.5" width="2" height="3.8"/><rect x="1266" y="513.5" width="3" height="47.7"/><rect x="1269" y="513.5" width="1" height="38.0"/><rect x="1408" y="513.5" width="1" height="6.5"/><rect x="1409" y="513.5" width="2" height="9.2"/><rect x="1411" y="513.5" width="3" height="28.3"/><rect x="1414" y="513.5" width="1" height="76.7"/><rect x="1415" y="513.5" width="1" height="7.6"/><rect x="1416" y="513.5" width="1" height="6.0"/><rect x="1417" y="513.5" width="1" height="3.2"/><rect x="1418" y="513.5" width="2" height="8.8"/><rect x="1421" y="513.5" width="1" height="75.2"/><rect x="1422" y="513.5" width="1" height="89.0"/><rect x="1423" y="513.5" width="1" height="57.6"/><rect x="1424" y="513.5" width="2" height="18.1"/><rect x="1427" y="513.5" width="2" height="46.1"/><rect x="1429" y="513.5" width="2" height="89.0"/><rect x="1431" y="513.5" width="2" height="89.0"/><rect x="1433" y="513.5" width="3" height="49.7"/><rect x="1436" y="513.5" width="1" height="81.0"/><rect x="1437" y="513.5" width="2" height="89.0"/><rect x="1439" y="513.5" width="3" height="13.4"/><rect x="1442" y="513.5" width="1" height="89.0"/><rect x="1443" y="513.5" width="3" height="22.5"/><rect x="1446" y="513.5" width="1" height="69.8"/><rect x="1447" y="513.5" width="1" height="18.7"/><rect x="1448" y="513.5" width="2" height="89.0"/><rect x="1450" y="513.5" width="1" height="9.0"/><rect x="1451" y="513.5" width="2" height="81.7"/><rect x="1453" y="513.5" width="2" height="3.6"/><rect x="1455" y="513.5" width="2" height="7.8"/><rect x="1457" y="513.5" width="2" height="89.0"/><rect x="1459" y="513.5" width="1" height="89.0"/><rect x="1460" y="513.5" width="2" height="79.2"/><rect x="1462" y="513.5" width="2" height="89.0"/><rect x="1464" y="513.5" width="1" height="11.6"/><rect x="1465" y="513.5" width="1" height="89.0"/><rect x="1466" y="513.5" width="1" height="45.0"/><rect x="1467" y="513.5" width="3" height="76.7"/><rect x="1470" y="513.5" width="2" height="6.3"/><rect x="1472" y="513.5" width="1" height="5.4"/><rect x="1593" y="513.5" width="1" height="10.3"/><rect x="1594" y="513.5" width="1" height="11.3"/><rect x="1595" y="513.5" width="2" height="19.5"/><rect x="1597" y="513.5" width="2" height="56.4"/><rect x="1599" y="513.5" width="2" height="78.7"/><rect x="1601" y="513.5" width="1" height="34.0"/><rect x="1602" y="513.5" width="2" height="36.0"/><rect x="1604" y="513.5" width="3" height="45.4"/><rect x="1607" y="513.5" width="2" height="33.8"/><rect x="1609" y="513.5" width="3" height="89.0"/><rect x="1613" y="513.5" width="2" height="40.1"/><rect x="1615" y="513.5" width="2" height="44.6"/><rect x="1617" y="513.5" width="3" height="33.6"/><rect x="1620" y="513.5" width="2" height="89.0"/><rect x="1622" y="513.5" width="2" height="26.7"/><rect x="1624" y="513.5" width="2" height="89.0"/><rect x="1626" y="513.5" width="1" height="86.1"/><rect x="1628" y="513.5" width="2" height="30.7"/><rect x="1631" y="513.5" width="1" height="21.3"/><rect x="1633" y="513.5" width="2" height="89.0"/><rect x="1635" y="513.5" width="3" height="13.7"/><rect x="1638" y="513.5" width="2" height="20.0"/><rect x="1640" y="513.5" width="3" height="26.1"/><rect x="1644" y="513.5" width="2" height="44.5"/><rect x="1646" y="513.5" width="2" height="42.1"/><rect x="1648" y="513.5" width="1" height="85.8"/><rect x="1649" y="513.5" width="2" height="31.3"/><rect x="1652" y="513.5" width="2" height="20.4"/><rect x="1654" y="513.5" width="1" height="38.7"/><rect x="1783" y="513.5" width="2" height="35.6"/><rect x="1785" y="513.5" width="2" height="49.3"/><rect x="1787" y="513.5" width="3" height="11.9"/><rect x="1790" y="513.5" width="1" height="20.0"/><rect x="1791" y="513.5" width="2" height="71.2"/><rect x="1793" y="513.5" width="2" height="49.4"/><rect x="1795" y="513.5" width="3" height="4.4"/><rect x="1798" y="513.5" width="2" height="74.8"/><rect x="1800" y="513.5" width="1" height="89.0"/><rect x="1801" y="513.5" width="3" height="61.7"/><rect x="1804" y="513.5" width="2" height="12.2"/><rect x="1807" y="513.5" width="3" height="11.0"/><rect x="1810" y="513.5" width="1" height="23.0"/><rect x="1811" y="513.5" width="3" height="89.0"/><rect x="1814" y="513.5" width="2" height="24.2"/><rect x="1816" y="513.5" width="1" height="89.0"/><rect x="1817" y="513.5" width="1" height="89.0"/><rect x="1818" y="513.5" width="3" height="22.0"/><rect x="1821" y="513.5" width="1" height="52.8"/><rect x="1822" y="513.5" width="1" height="14.9"/><rect x="1823" y="513.5" width="2" height="11.1"/><rect x="1825" y="513.5" width="3" height="89.0"/><rect x="1829" y="513.5" width="1" height="15.7"/><rect x="1830" y="513.5" width="2" height="21.0"/><rect x="1832" y="513.5" width="1" height="26.3"/><rect x="1833" y="513.5" width="3" height="25.9"/><rect x="1836" y="513.5" width="3" height="87.0"/><rect x="1839" y="513.5" width="2" height="70.3"/><rect x="1841" y="513.5" width="1" height="64.9"/><rect x="1842" y="513.5" width="1" height="72.8"/><rect x="1843" y="513.5" width="2" height="22.3"/><rect x="1845" y="513.5" width="1" height="13.2"/><rect x="1846" y="513.5" width="2" height="42.2"/><rect x="1954" y="513.5" width="1" height="35.6"/><rect x="1955" y="513.5" width="1" height="49.1"/><rect x="1956" y="513.5" width="2" height="16.3"/><rect x="1958" y="513.5" width="2" height="89.0"/><rect x="1960" y="513.5" width="1" height="79.2"/><rect x="1961" y="513.5" width="3" height="21.3"/><rect x="1964" y="513.5" width="2" height="20.4"/><rect x="1966" y="513.5" width="3" height="47.4"/><rect x="1969" y="513.5" width="1" height="89.0"/><rect x="1970" y="513.5" width="3" height="27.0"/><rect x="1973" y="513.5" width="3" height="32.7"/><rect x="1976" y="513.5" width="1" height="29.9"/><rect x="1978" y="513.5" width="1" height="89.0"/><rect x="1979" y="513.5" width="3" height="89.0"/><rect x="1982" y="513.5" width="2" height="16.5"/><rect x="1984" y="513.5" width="3" height="53.4"/><rect x="2059" y="513.5" width="2" height="35.6"/><rect x="2061" y="513.5" width="2" height="61.8"/><rect x="2064" y="513.5" width="1" height="14.0"/><rect x="2065" y="513.5" width="1" height="25.1"/><rect x="2066" y="513.5" width="1" height="89.0"/><rect x="2067" y="513.5" width="2" height="89.0"/><rect x="2069" y="513.5" width="3" height="22.7"/><rect x="2072" y="513.5" width="3" height="23.7"/><rect x="2075" y="513.5" width="2" height="25.2"/><rect x="2077" y="513.5" width="2" height="89.0"/><rect x="2079" y="513.5" width="1" height="89.0"/><rect x="2080" y="513.5" width="2" height="89.0"/><rect x="2082" y="513.5" width="2" height="24.2"/><rect x="2084" y="513.5" width="3" height="89.0"/><rect x="2087" y="513.5" width="2" height="10.9"/><rect x="2089" y="513.5" width="1" height="17.3"/><rect x="2090" y="513.5" width="3" height="70.7"/><rect x="2206" y="513.5" width="1" height="29.8"/><rect x="2208" y="513.5" width="1" height="55.8"/><rect x="2209" y="513.5" width="1" height="5.5"/><rect x="2210" y="513.5" width="2" height="3.8"/><rect x="2212" y="513.5" width="1" height="71.5"/><rect x="2213" y="513.5" width="2" height="7.9"/><rect x="2215" y="513.5" width="3" height="89.0"/><rect x="2218" y="513.5" width="1" height="60.3"/><rect x="2219" y="513.5" width="3" height="12.6"/><rect x="2223" y="513.5" width="2" height="3.9"/><rect x="2225" y="513.5" width="2" height="4.1"/><rect x="2227" y="513.5" width="1" height="66.0"/><rect x="2228" y="513.5" width="3" height="73.3"/><rect x="2231" y="513.5" width="2" height="3.9"/><rect x="2233" y="513.5" width="1" height="89.0"/><rect x="2234" y="513.5" width="2" height="89.0"/><rect x="2236" y="513.5" width="2" height="89.0"/><rect x="2238" y="513.5" width="2" height="89.0"/><rect x="2240" y="513.5" width="1" height="3.6"/><rect x="2241" y="513.5" width="2" height="8.4"/><rect x="2243" y="513.5" width="2" height="89.0"/><rect x="2245" y="513.5" width="2" height="16.7"/><rect x="2247" y="513.5" width="2" height="65.9"/><rect x="2354" y="513.5" width="2" height="32.0"/><rect x="2356" y="513.5" width="1" height="7.2"/><rect x="2357" y="513.5" width="2" height="6.3"/><rect x="2359" y="513.5" width="3" height="3.1"/><rect x="2362" y="513.5" width="2" height="8.1"/><rect x="2364" y="513.5" width="2" height="3.0"/><rect x="2366" y="513.5" width="2" height="3.6"/><rect x="2369" y="513.5" width="2" height="14.8"/><rect x="2371" y="513.5" width="1" height="39.9"/><rect x="2372" y="513.5" width="3" height="17.5"/><rect x="2375" y="513.5" width="2" height="80.1"/><rect x="2377" y="513.5" width="3" height="10.6"/><rect x="2380" y="513.5" width="1" height="14.3"/><rect x="2381" y="513.5" width="1" height="80.1"/><rect x="2382" y="513.5" width="1" height="80.1"/><rect x="2384" y="513.5" width="2" height="80.1"/><rect x="2386" y="513.5" width="2" height="25.3"/><rect x="2388" y="513.5" width="2" height="22.0"/><rect x="2390" y="513.5" width="1" height="40.7"/><rect x="2391" y="513.5" width="1" height="17.9"/><rect x="2394" y="513.5" width="1" height="5.8"/><rect x="2395" y="513.5" width="1" height="7.8"/><rect x="2396" y="513.5" width="1" height="50.2"/><rect x="2397" y="513.5" width="1" height="24.5"/></g><rect x="595" y="506.5" width="1835" height="1.2" fill="#a8a8a8"/><rect x="595" y="512.8" width="1835" height="1.2" fill="#a8a8a8"/><rect x="595" y="507.7" width="1835" height="5.1" fill="#fff"/></svg>
<div class="a" style="left:587px;top:490.7px;width:15px;height:39px;background:#2a56c0;border-radius:7.5px;box-shadow:0 0 0 1px #fff"></div>
<svg class="a" style="left:706.0px;top:491.0px;" width="38" height="38" viewBox="-1 -1 38 38"><circle cx="18" cy="18" r="18.2" fill="#fff"/><circle cx="18" cy="18" r="17.5" fill="#4e3553"/><text x="18" y="25" text-anchor="middle" font-family="Liberation Sans" font-weight="bold" font-size="20" fill="#fff">1</text></svg>
<svg class="a" style="left:798.0px;top:491.0px;" width="38" height="38" viewBox="-1 -1 38 38"><circle cx="18" cy="18" r="18.2" fill="#fff"/><circle cx="18" cy="18" r="17.5" fill="#dc2e1a"/><g fill="none" stroke="#fff" stroke-width="1.6" stroke-linejoin="round"><path d="M9.5 8.3h12.6v13.5l-5 7c-.6.9-1.9.7-2.1-.4l.3-5.2H9.6c-1.2 0-1.8-.6-1.7-1.8l.6-12c.1-.7.3-1.1 1-1.1z"/><path d="M23.8 8.3h4v13.5h-4z"/></g></svg>
<svg class="a" style="left:894.6px;top:491.0px;" width="38" height="38" viewBox="-1 -1 38 38"><circle cx="18" cy="18" r="18.2" fill="#fff"/><circle cx="18" cy="18" r="17.5" fill="#dc2e1a"/><circle cx="18" cy="18" r="11" fill="none" stroke="#fff" stroke-width="1.6"/><circle cx="14.5" cy="15.4" r="1.5" fill="#fff"/><circle cx="21.5" cy="15.4" r="1.5" fill="#fff"/><path d="M13.8 22h8.4" stroke="#fff" stroke-width="1.7"/></svg>
<svg class="a" style="left:984.0px;top:491.0px;" width="38" height="38" viewBox="-1 -1 38 38"><circle cx="18" cy="18" r="18.2" fill="#fff"/><circle cx="18" cy="18" r="17.5" fill="#dc2e1a"/><g fill="none" stroke="#fff" stroke-width="1.6" stroke-linejoin="round"><path d="M9.5 8.3h12.6v13.5l-5 7c-.6.9-1.9.7-2.1-.4l.3-5.2H9.6c-1.2 0-1.8-.6-1.7-1.8l.6-12c.1-.7.3-1.1 1-1.1z"/><path d="M23.8 8.3h4v13.5h-4z"/></g></svg>
<svg class="a" style="left:1042.5px;top:491.0px;" width="38" height="38" viewBox="-1 -1 38 38"><circle cx="18" cy="18" r="18.2" fill="#fff"/><circle cx="18" cy="18" r="17.5" fill="#dc2e1a"/><circle cx="18" cy="18" r="11" fill="none" stroke="#fff" stroke-width="1.6"/><circle cx="14.5" cy="15.4" r="1.5" fill="#fff"/><circle cx="21.5" cy="15.4" r="1.5" fill="#fff"/><path d="M13.8 22h8.4" stroke="#fff" stroke-width="1.7"/></svg>
<svg class="a" style="left:1221.0px;top:491.0px;" width="38" height="38" viewBox="-1 -1 38 38"><circle cx="18" cy="18" r="18.2" fill="#fff"/><circle cx="18" cy="18" r="17.5" fill="#dc2e1a"/><g fill="none" stroke="#fff" stroke-width="1.6" stroke-linejoin="round"><path d="M9.5 8.3h12.6v13.5l-5 7c-.6.9-1.9.7-2.1-.4l.3-5.2H9.6c-1.2 0-1.8-.6-1.7-1.8l.6-12c.1-.7.3-1.1 1-1.1z"/><path d="M23.8 8.3h4v13.5h-4z"/></g></svg>
<svg class="a" style="left:1279.0px;top:491.0px;" width="38" height="38" viewBox="-1 -1 38 38"><circle cx="18" cy="18" r="18.2" fill="#fff"/><circle cx="18" cy="18" r="17.5" fill="#dc2e1a"/><circle cx="18" cy="18" r="11" fill="none" stroke="#fff" stroke-width="1.6"/><circle cx="14.5" cy="15.4" r="1.5" fill="#fff"/><circle cx="21.5" cy="15.4" r="1.5" fill="#fff"/><path d="M13.8 22h8.4" stroke="#fff" stroke-width="1.7"/></svg>
<svg class="a" style="left:1387.7px;top:491.0px;" width="38" height="38" viewBox="-1 -1 38 38"><circle cx="18" cy="18" r="18.2" fill="#fff"/><circle cx="18" cy="18" r="17.5" fill="#dc2e1a"/><g fill="none" stroke="#fff" stroke-width="1.6" stroke-linejoin="round"><path d="M9.5 8.3h12.6v13.5l-5 7c-.6.9-1.9.7-2.1-.4l.3-5.2H9.6c-1.2 0-1.8-.6-1.7-1.8l.6-12c.1-.7.3-1.1 1-1.1z"/><path d="M23.8 8.3h4v13.5h-4z"/></g></svg>
<svg class="a" style="left:1474.5px;top:491.0px;" width="38" height="38" viewBox="-1 -1 38 38"><circle cx="18" cy="18" r="18.2" fill="#fff"/><circle cx="18" cy="18" r="17.5" fill="#3c7a2d"/><circle cx="18" cy="18" r="10.8" fill="none" stroke="#fff" stroke-width="1.5"/><circle cx="14.3" cy="15" r="1.5" fill="#fff"/><circle cx="21.7" cy="15" r="1.5" fill="#fff"/><path d="M12.8 19.6c1.4 2.2 3.2 3.2 5.2 3.2s3.8-1 5.2-3.2" fill="none" stroke="#fff" stroke-width="1.6" stroke-linecap="round"/></svg>
<svg class="a" style="left:1572.5px;top:491.0px;" width="38" height="38" viewBox="-1 -1 38 38"><circle cx="18" cy="18" r="18.2" fill="#fff"/><circle cx="18" cy="18" r="17.5" fill="#dc2e1a"/><g fill="none" stroke="#fff" stroke-width="1.6" stroke-linejoin="round"><path d="M9.5 8.3h12.6v13.5l-5 7c-.6.9-1.9.7-2.1-.4l.3-5.2H9.6c-1.2 0-1.8-.6-1.7-1.8l.6-12c.1-.7.3-1.1 1-1.1z"/><path d="M23.8 8.3h4v13.5h-4z"/></g></svg>
<svg class="a" style="left:1653.0px;top:491.0px;" width="38" height="38" viewBox="-1 -1 38 38"><circle cx="18" cy="18" r="18.2" fill="#fff"/><circle cx="18" cy="18" r="17.5" fill="#3c7a2d"/><circle cx="18" cy="18" r="10.8" fill="none" stroke="#fff" stroke-width="1.5"/><circle cx="14.3" cy="15" r="1.5" fill="#fff"/><circle cx="21.7" cy="15" r="1.5" fill="#fff"/><path d="M12.8 19.6c1.4 2.2 3.2 3.2 5.2 3.2s3.8-1 5.2-3.2" fill="none" stroke="#fff" stroke-width="1.6" stroke-linecap="round"/></svg>
<svg class="a" style="left:1759.8px;top:491.0px;" width="38" height="38" viewBox="-1 -1 38 38"><circle cx="18" cy="18" r="18.2" fill="#fff"/><circle cx="18" cy="18" r="17.5" fill="#dc2e1a"/><g fill="none" stroke="#fff" stroke-width="1.6" stroke-linejoin="round"><path d="M9.5 8.3h12.6v13.5l-5 7c-.6.9-1.9.7-2.1-.4l.3-5.2H9.6c-1.2 0-1.8-.6-1.7-1.8l.6-12c.1-.7.3-1.1 1-1.1z"/><path d="M23.8 8.3h4v13.5h-4z"/></g></svg>
<svg class="a" style="left:1930.9px;top:491.0px;" width="38" height="38" viewBox="-1 -1 38 38"><circle cx="18" cy="18" r="18.2" fill="#fff"/><circle cx="18" cy="18" r="17.5" fill="#3c7a2d"/><rect x="10.3" y="15.6" width="5" height="5" rx="1.3" fill="#fff"/><rect x="15.5" y="15.6" width="5" height="5" rx="1.3" fill="#fff"/><rect x="20.7" y="15.6" width="5" height="5" rx="1.3" fill="#fff"/></svg>
<svg class="a" style="left:2034.6999999999998px;top:491.0px;" width="38" height="38" viewBox="-1 -1 38 38"><circle cx="18" cy="18" r="18.2" fill="#fff"/><circle cx="18" cy="18" r="17.5" fill="#3c7a2d"/><rect x="10.3" y="15.6" width="5" height="5" rx="1.3" fill="#fff"/><rect x="15.5" y="15.6" width="5" height="5" rx="1.3" fill="#fff"/><rect x="20.7" y="15.6" width="5" height="5" rx="1.3" fill="#fff"/></svg>
<svg class="a" style="left:2084.9px;top:491.0px;" width="38" height="38" viewBox="-1 -1 38 38"><circle cx="18" cy="18" r="18.2" fill="#fff"/><circle cx="18" cy="18" r="17.5" fill="#3c7a2d"/><circle cx="18" cy="18" r="10.8" fill="none" stroke="#fff" stroke-width="1.5"/><circle cx="14.3" cy="15" r="1.5" fill="#fff"/><circle cx="21.7" cy="15" r="1.5" fill="#fff"/><path d="M12.8 19.6c1.4 2.2 3.2 3.2 5.2 3.2s3.8-1 5.2-3.2" fill="none" stroke="#fff" stroke-width="1.6" stroke-linecap="round"/></svg>
<svg class="a" style="left:2181.0px;top:491.0px;" width="38" height="38" viewBox="-1 -1 38 38"><circle cx="18" cy="18" r="18.2" fill="#fff"/><circle cx="18" cy="18" r="17.5" fill="#3c7a2d"/><g fill="none" stroke="#fff" stroke-width="1.6" stroke-linejoin="round"><path d="M13.3 27.7h12.4c1.1 0 1.7-.6 1.7-1.5l.6-10.8c0-1-.6-1.6-1.6-1.6h-7l.6-5.6c.1-1.1-1.3-1.4-1.9-.5l-4.8 7.2"/><path d="M8.3 15.2h3.6v12.5H8.3z"/></g></svg>
<svg class="a" style="left:2237.0px;top:491.0px;" width="38" height="38" viewBox="-1 -1 38 38"><circle cx="18" cy="18" r="18.2" fill="#fff"/><circle cx="18" cy="18" r="17.5" fill="#3c7a2d"/><circle cx="18" cy="18" r="10.8" fill="none" stroke="#fff" stroke-width="1.5"/><circle cx="14.3" cy="15" r="1.5" fill="#fff"/><circle cx="21.7" cy="15" r="1.5" fill="#fff"/><path d="M12.8 19.6c1.4 2.2 3.2 3.2 5.2 3.2s3.8-1 5.2-3.2" fill="none" stroke="#fff" stroke-width="1.6" stroke-linecap="round"/></svg>
<svg class="a" style="left:2327.0px;top:491.0px;" width="38" height="38" viewBox="-1 -1 38 38"><circle cx="18" cy="18" r="18.2" fill="#fff"/><circle cx="18" cy="18" r="17.5" fill="#3c7a2d"/><g fill="none" stroke="#fff" stroke-width="1.6" stroke-linejoin="round"><path d="M13.3 27.7h12.4c1.1 0 1.7-.6 1.7-1.5l.6-10.8c0-1-.6-1.6-1.6-1.6h-7l.6-5.6c.1-1.1-1.3-1.4-1.9-.5l-4.8 7.2"/><path d="M8.3 15.2h3.6v12.5H8.3z"/></g></svg>
<svg class="a" style="left:2534px;top:404.7px" width="38.5" height="32.5" viewBox="1.5 4.2 31.5 28.6" preserveAspectRatio="none"><path d="M2 12.5h6l9-7.5v27l-9-7.5H2z" fill="#2a56c0"/><g fill="none" stroke="#2a56c0" stroke-width="2.4" stroke-linecap="round"><path d="M21 14.5c1.5 1.5 1.5 6.5 0 8"/><path d="M24.8 10.8c3.3 3.3 3.3 12.2 0 15.5"/><path d="M28.5 7.2c5 5 5 17.5 0 22.5"/></g></svg>
<svg class="a" style="left:2534px;top:616.7px" width="38.5" height="32.5" viewBox="1.5 4.2 31.5 28.6" preserveAspectRatio="none"><path d="M2 12.5h6l9-7.5v27l-9-7.5H2z" fill="#2a56c0"/><g fill="none" stroke="#2a56c0" stroke-width="2.4" stroke-linecap="round"><path d="M21 14.5c1.5 1.5 1.5 6.5 0 8"/><path d="M24.8 10.8c3.3 3.3 3.3 12.2 0 15.5"/><path d="M28.5 7.2c5 5 5 17.5 0 22.5"/></g></svg>
<svg class="a" style="left:2533px;top:473px;" width="110" height="110" viewBox="0 0 110 110"><circle cx="55" cy="55" r="54" fill="#2a56c0"/><path d="M37.5 30.5v46.5l42-23.3z" fill="#fff"/></svg>
<div class="a" style="left:2684.5px;top:465px;width:5px;height:126px;background:#2a56c0;"></div>
<div class="a" style="left:2667.5px;top:539px;width:39px;height:15px;background:#2a56c0;border-radius:7.5px"></div>
<div class="a" style="left:2728.0px;top:514.8px;font-size:25px;line-height:25px;color:#353b46;letter-spacing:-1.201px;">x1</div>
<div class="a" style="left:586px;top:664px;width:797px;height:54px;background:#fcfcfd;border:1.5px solid #d3dbe6;border-radius:5px 0 0 5px;box-shadow:inset 0 1px 4px rgba(0,0,0,0.10)"></div>
<svg class="a" style="left:603px;top:678px;" width="23" height="23" viewBox="0 0 23 23"><path d="M1.5 21.5l.6-4.3L15.8 3.5c.6-.6 1.4-.6 2 0l1.7 1.7c.6.6.6 1.4 0 2L5.8 20.9z" fill="#b0b0b0"/><path d="M3.3 17.8l1.9 1.9M13.8 5.6l3.6 3.6" stroke="#fcfcfd" stroke-width="1"/></svg>
<div class="a" style="left:641.9px;top:679.7px;font-size:23px;line-height:23px;color:#454e5d;letter-spacing:-0.608px;">Add Annotation</div>
<div class="a" style="left:1382.5px;top:664px;width:125px;height:54px;background:#f0f2f5;border-radius:0 5px 5px 0"></div>
<div class="a" style="left:1401.5px;top:678.8px;font-size:23px;line-height:23px;color:#8e949b;letter-spacing:-0.571px;">Annotate</div>
<div class="a" style="left:149.7px;top:787.1px;font-size:26px;line-height:26px;color:#353b46;letter-spacing:-0.596px;">Details</div>
<div class="a" style="left:278.3px;top:787.1px;font-size:26px;line-height:26px;color:#353b46;letter-spacing:-0.260px;">Timeline</div>
<div class="a" style="left:426.5px;top:787.1px;font-size:26px;line-height:26px;color:#353b46;letter-spacing:-0.591px;">Quality Summary</div>
<div class="a" style="left:670.0px;top:787.1px;font-size:26px;line-height:26px;color:#2a303b;font-weight:bold;letter-spacing:-1.070px;">Transcript</div>
<div class="a" style="left:838.0px;top:787.1px;font-size:26px;line-height:26px;color:#353b46;letter-spacing:-0.418px;">Audit Trail</div>
<div class="a" style="left:1002.4px;top:787.1px;font-size:26px;line-height:26px;color:#353b46;letter-spacing:-0.459px;">Customer Journeys</div>
<div class="a" style="left:641.6px;top:830px;width:174.2px;height:6px;background:#2a55c0;"></div>
<div class="a" style="left:122px;top:838px;width:2727px;height:872px;background:transparent;border:1px solid #d0d4d9;border-bottom:1.5px solid #d0d4d9"></div>
<div class="a" style="left:150px;top:888.6px;width:1759px;height:79.1px;background:#f4f5f7;"></div>
<div class="a" style="left:222.5px;top:915.8px;font-size:25px;line-height:25px;color:#2a303b;font-weight:bold;letter-spacing:0.013px;">00:54</div>
<svg class="a" style="left:346px;top:907.6px;" width="40" height="40" viewBox="0 0 40 40"><defs><clipPath id="cc"><circle cx="20" cy="20" r="18"/></clipPath></defs><circle cx="20" cy="20" r="18.25" fill="none" stroke="#15244a" stroke-width="3.5"/><circle cx="20" cy="15.15" r="5.1" fill="none" stroke="#15244a" stroke-width="3.3"/><ellipse cx="20" cy="32.6" rx="10.4" ry="6" fill="none" stroke="#15244a" stroke-width="3.3" clip-path="url(#cc)"/></svg>
<svg class="a" style="left:413.0px;top:910.4px;" width="36" height="36" viewBox="0 0 36 36"><circle cx="18" cy="18" r="18" fill="#dc2e1a"/><g transform="rotate(180 18 18) scale(-1 1) translate(-36 0)"><rect x="5.2" y="14.2" width="6.2" height="15.3" rx="1" fill="#fff"/><path d="M13.6 14l5.2-7c.7-.9 2-.5 2 .7l-.7 4.9h7.2c1.2 0 2 1 1.7 2.1l-2.7 11.6c-.4 1.7-1.6 2.9-3.6 2.9h-5.2c-1.6 0-2.8-.6-3.9-1.7" fill="none" stroke="#fff" stroke-width="1.7" stroke-linejoin="round" stroke-linecap="round"/></g></svg>
<div class="a" style="left:453.0px;top:915.8px;font-size:25px;line-height:25px;color:#2a303b;font-weight:bold;letter-spacing:-0.687px;">I am very upset with the product being delivered in a non working condition.</div>
<div class="a" style="left:222.5px;top:994.9px;font-size:25px;line-height:25px;color:#2a303b;font-weight:bold;letter-spacing:0.013px;">00:59</div>
<svg class="a" style="left:346px;top:986.7px;" width="40" height="40" viewBox="0 0 40 40"><circle cx="20" cy="20" r="18.3" fill="none" stroke="#2a57c5" stroke-width="3.3"/><g fill="none" stroke="#2a57c5" stroke-width="2.2" stroke-linejoin="miter"><path d="M12.1 31.3V22.6C9.9 20.7 8.6 18.1 8.6 15.3 8.6 10.7 12.7 7.9 18.3 7.9c4.8 0 8.2 2.6 9.6 6.4l3.6 6.9h-3.8v5.7h-4.5v4.4"/><circle cx="17.9" cy="17.5" r="3.9"/><path d="M17.9 8.2v5.4"/></g><circle cx="17.9" cy="17.5" r="1" fill="#2a57c5"/></svg>
<svg class="a" style="left:413.0px;top:989.5px;" width="36" height="36" viewBox="0 0 36 36"><circle cx="18" cy="18" r="18" fill="#3c7a2d"/><circle cx="18" cy="18" r="12.2" fill="none" stroke="#fff" stroke-width="1.5"/><circle cx="14.3" cy="15" r="1.7" fill="#fff"/><circle cx="21.7" cy="15" r="1.7" fill="#fff"/><path d="M12.3 19.8c1.5 2.5 3.4 3.7 5.7 3.7s4.2-1.2 5.7-3.7" fill="none" stroke="#fff" stroke-width="1.9" stroke-linecap="round"/></svg>
<div class="a" style="left:453.0px;top:994.9px;font-size:25px;line-height:25px;color:#2a303b;font-weight:bold;letter-spacing:-0.673px;">You&#x27;re a valuable customer to us and your frustration is completely valid. It should not have happened that way.</div>
<div class="a" style="left:150px;top:1046.8px;width:1759px;height:79.1px;background:#f4f5f7;"></div>
<div class="a" style="left:222.5px;top:1074.0px;font-size:25px;line-height:25px;color:#2a303b;font-weight:bold;letter-spacing:0.013px;">01:04</div>
<svg class="a" style="left:346px;top:1065.8px;" width="40" height="40" viewBox="0 0 40 40"><defs><clipPath id="cc"><circle cx="20" cy="20" r="18"/></clipPath></defs><circle cx="20" cy="20" r="18.25" fill="none" stroke="#15244a" stroke-width="3.5"/><circle cx="20" cy="15.15" r="5.1" fill="none" stroke="#15244a" stroke-width="3.3"/><ellipse cx="20" cy="32.6" rx="10.4" ry="6" fill="none" stroke="#15244a" stroke-width="3.3" clip-path="url(#cc)"/></svg>
<svg class="a" style="left:413.0px;top:1068.6px;" width="36" height="36" viewBox="0 0 36 36"><circle cx="18" cy="18" r="18" fill="#dc2e1a"/><g transform="rotate(180 18 18) scale(-1 1) translate(-36 0)"><rect x="5.2" y="14.2" width="6.2" height="15.3" rx="1" fill="#fff"/><path d="M13.6 14l5.2-7c.7-.9 2-.5 2 .7l-.7 4.9h7.2c1.2 0 2 1 1.7 2.1l-2.7 11.6c-.4 1.7-1.6 2.9-3.6 2.9h-5.2c-1.6 0-2.8-.6-3.9-1.7" fill="none" stroke="#fff" stroke-width="1.7" stroke-linejoin="round" stroke-linecap="round"/></g></svg>
<div class="a" style="left:453.0px;top:1074.0px;font-size:25px;line-height:25px;color:#2a303b;font-weight:bold;letter-spacing:-0.717px;">I&#x27;m losing my patience. Can I have a solution for my problem?</div>
<div class="a" style="left:222.5px;top:1153.1px;font-size:25px;line-height:25px;color:#2a303b;font-weight:bold;letter-spacing:0.013px;">01:09</div>
<svg class="a" style="left:346px;top:1144.9px;" width="40" height="40" viewBox="0 0 40 40"><circle cx="20" cy="20" r="18.3" fill="none" stroke="#2a57c5" stroke-width="3.3"/><g fill="none" stroke="#2a57c5" stroke-width="2.2" stroke-linejoin="miter"><path d="M12.1 31.3V22.6C9.9 20.7 8.6 18.1 8.6 15.3 8.6 10.7 12.7 7.9 18.3 7.9c4.8 0 8.2 2.6 9.6 6.4l3.6 6.9h-3.8v5.7h-4.5v4.4"/><circle cx="17.9" cy="17.5" r="3.9"/><path d="M17.9 8.2v5.4"/></g><circle cx="17.9" cy="17.5" r="1" fill="#2a57c5"/></svg>
<div class="a" style="left:413.0px;top:1153.1px;font-size:25px;line-height:25px;color:#353b46;letter-spacing:0.062px;">Let me raise the ticket and concerned team will help to fix your issue.</div>
<div class="a" style="left:150px;top:1205.0px;width:1759px;height:79.1px;background:#f4f5f7;"></div>
<div class="a" style="left:222.5px;top:1232.2px;font-size:25px;line-height:25px;color:#2a303b;font-weight:bold;letter-spacing:0.013px;">01:14</div>
<svg class="a" style="left:346px;top:1224.0px;" width="40" height="40" viewBox="0 0 40 40"><defs><clipPath id="cc"><circle cx="20" cy="20" r="18"/></clipPath></defs><circle cx="20" cy="20" r="18.25" fill="none" stroke="#15244a" stroke-width="3.5"/><circle cx="20" cy="15.15" r="5.1" fill="none" stroke="#15244a" stroke-width="3.3"/><ellipse cx="20" cy="32.6" rx="10.4" ry="6" fill="none" stroke="#15244a" stroke-width="3.3" clip-path="url(#cc)"/></svg>
<svg class="a" style="left:413.0px;top:1226.8px;" width="36" height="36" viewBox="0 0 36 36"><circle cx="18" cy="18" r="18" fill="#3c7a2d"/><rect x="5.2" y="14.2" width="6.2" height="15.3" rx="1" fill="#fff"/><path d="M13.6 14l5.2-7c.7-.9 2-.5 2 .7l-.7 4.9h7.2c1.2 0 2 1 1.7 2.1l-2.7 11.6c-.4 1.7-1.6 2.9-3.6 2.9h-5.2c-1.6 0-2.8-.6-3.9-1.7" fill="none" stroke="#fff" stroke-width="1.7" stroke-linejoin="round" stroke-linecap="round"/></svg>
<svg class="a" style="left:452.0px;top:1226.8px;" width="36" height="36" viewBox="0 0 36 36"><circle cx="18" cy="18" r="18" fill="#4e3553"/><text x="18" y="24.2" text-anchor="middle" font-family="Liberation Sans" font-weight="bold" font-size="22.5" fill="#fff">2</text></svg>
<div class="a" style="left:492.5px;top:1232.2px;font-size:25px;line-height:25px;color:#2a303b;font-weight:bold;letter-spacing:-0.738px;">Thank you so much for your help, you are the best.</div>
<div class="a" style="left:492.6px;top:1265.0px;width:376.4px;height:1.5px;background:transparent;border-top:1.6px dotted #6b7079"></div>
<div class="a" style="left:222.5px;top:1311.3px;font-size:25px;line-height:25px;color:#2a303b;font-weight:bold;letter-spacing:0.013px;">01:16</div>
<svg class="a" style="left:346px;top:1303.1000000000001px;" width="40" height="40" viewBox="0 0 40 40"><circle cx="20" cy="20" r="18.3" fill="none" stroke="#2a57c5" stroke-width="3.3"/><g fill="none" stroke="#2a57c5" stroke-width="2.2" stroke-linejoin="miter"><path d="M12.1 31.3V22.6C9.9 20.7 8.6 18.1 8.6 15.3 8.6 10.7 12.7 7.9 18.3 7.9c4.8 0 8.2 2.6 9.6 6.4l3.6 6.9h-3.8v5.7h-4.5v4.4"/><circle cx="17.9" cy="17.5" r="3.9"/><path d="M17.9 8.2v5.4"/></g><circle cx="17.9" cy="17.5" r="1" fill="#2a57c5"/></svg>
<div class="a" style="left:413.0px;top:1311.3px;font-size:25px;line-height:25px;color:#353b46;letter-spacing:-0.111px;">Thanks for calling, have a great day.</div>
<div class="a" style="left:150px;top:1363.2px;width:1759px;height:79.1px;background:#f4f5f7;"></div>
<div class="a" style="left:222.5px;top:1390.4px;font-size:25px;line-height:25px;color:#2a303b;font-weight:bold;letter-spacing:0.013px;">01:19</div>
<svg class="a" style="left:346px;top:1382.2px;" width="40" height="40" viewBox="0 0 40 40"><defs><clipPath id="cc"><circle cx="20" cy="20" r="18"/></clipPath></defs><circle cx="20" cy="20" r="18.25" fill="none" stroke="#15244a" stroke-width="3.5"/><circle cx="20" cy="15.15" r="5.1" fill="none" stroke="#15244a" stroke-width="3.3"/><ellipse cx="20" cy="32.6" rx="10.4" ry="6" fill="none" stroke="#15244a" stroke-width="3.3" clip-path="url(#cc)"/></svg>
<svg class="a" style="left:413.0px;top:1385.0px;" width="36" height="36" viewBox="0 0 36 36"><circle cx="18" cy="18" r="18" fill="#3c7a2d"/><rect x="5.2" y="14.2" width="6.2" height="15.3" rx="1" fill="#fff"/><path d="M13.6 14l5.2-7c.7-.9 2-.5 2 .7l-.7 4.9h7.2c1.2 0 2 1 1.7 2.1l-2.7 11.6c-.4 1.7-1.6 2.9-3.6 2.9h-5.2c-1.6 0-2.8-.6-3.9-1.7" fill="none" stroke="#fff" stroke-width="1.7" stroke-linejoin="round" stroke-linecap="round"/></svg>
<svg class="a" style="left:452.0px;top:1385.0px;" width="36" height="36" viewBox="0 0 36 36"><circle cx="18" cy="18" r="18" fill="#4e3553"/><text x="18" y="24.2" text-anchor="middle" font-family="Liberation Sans" font-weight="bold" font-size="22.5" fill="#fff">3</text></svg>
<div class="a" style="left:492.5px;top:1390.4px;font-size:25px;line-height:25px;color:#2a303b;font-weight:bold;letter-spacing:-0.738px;">Thank you so much for your help, you are the best.</div>
<div class="a" style="left:492.6px;top:1423.2px;width:376.4px;height:1.5px;background:transparent;border-top:1.6px dotted #6b7079"></div>
<div class="a" style="left:222.5px;top:1469.5px;font-size:25px;line-height:25px;color:#2a303b;font-weight:bold;letter-spacing:0.013px;">01:22</div>
<svg class="a" style="left:346px;top:1461.3px;" width="40" height="40" viewBox="0 0 40 40"><circle cx="20" cy="20" r="18.3" fill="none" stroke="#2a57c5" stroke-width="3.3"/><g fill="none" stroke="#2a57c5" stroke-width="2.2" stroke-linejoin="miter"><path d="M12.1 31.3V22.6C9.9 20.7 8.6 18.1 8.6 15.3 8.6 10.7 12.7 7.9 18.3 7.9c4.8 0 8.2 2.6 9.6 6.4l3.6 6.9h-3.8v5.7h-4.5v4.4"/><circle cx="17.9" cy="17.5" r="3.9"/><path d="M17.9 8.2v5.4"/></g><circle cx="17.9" cy="17.5" r="1" fill="#2a57c5"/></svg>
<svg class="a" style="left:413.0px;top:1464.1px;" width="36" height="36" viewBox="0 0 36 36"><circle cx="18" cy="18" r="18" fill="#3c7a2d"/><circle cx="18" cy="18" r="12.2" fill="none" stroke="#fff" stroke-width="1.5"/><circle cx="14.3" cy="15" r="1.7" fill="#fff"/><circle cx="21.7" cy="15" r="1.7" fill="#fff"/><path d="M12.3 19.8c1.5 2.5 3.4 3.7 5.7 3.7s4.2-1.2 5.7-3.7" fill="none" stroke="#fff" stroke-width="1.9" stroke-linecap="round"/></svg>
<div class="a" style="left:453.0px;top:1469.5px;font-size:25px;line-height:25px;color:#2a303b;font-weight:bold;letter-spacing:-0.706px;">I can completely understand why you&#x27;re so upset. I assure you, quickest resolution to the problem.</div>
<div class="a" style="left:150px;top:1521.4px;width:1759px;height:79.1px;background:#f4f5f7;"></div>
<div class="a" style="left:222.5px;top:1548.6px;font-size:25px;line-height:25px;color:#2a303b;font-weight:bold;letter-spacing:0.013px;">01:27</div>
<svg class="a" style="left:346px;top:1540.3999999999999px;" width="40" height="40" viewBox="0 0 40 40"><defs><clipPath id="cc"><circle cx="20" cy="20" r="18"/></clipPath></defs><circle cx="20" cy="20" r="18.25" fill="none" stroke="#15244a" stroke-width="3.5"/><circle cx="20" cy="15.15" r="5.1" fill="none" stroke="#15244a" stroke-width="3.3"/><ellipse cx="20" cy="32.6" rx="10.4" ry="6" fill="none" stroke="#15244a" stroke-width="3.3" clip-path="url(#cc)"/></svg>
<svg class="a" style="left:413.0px;top:1543.1999999999998px;" width="36" height="36" viewBox="0 0 36 36"><circle cx="18" cy="18" r="18" fill="#3c7a2d"/><rect x="5.2" y="14.2" width="6.2" height="15.3" rx="1" fill="#fff"/><path d="M13.6 14l5.2-7c.7-.9 2-.5 2 .7l-.7 4.9h7.2c1.2 0 2 1 1.7 2.1l-2.7 11.6c-.4 1.7-1.6 2.9-3.6 2.9h-5.2c-1.6 0-2.8-.6-3.9-1.7" fill="none" stroke="#fff" stroke-width="1.7" stroke-linejoin="round" stroke-linecap="round"/></svg>
<div class="a" style="left:453.0px;top:1548.6px;font-size:25px;line-height:25px;color:#2a303b;font-weight:bold;letter-spacing:-0.618px;">Perfect. Thank you very much for your amazing service.</div>
<div class="a" style="left:222.5px;top:1627.7px;font-size:25px;line-height:25px;color:#2a303b;font-weight:bold;letter-spacing:0.013px;">01:30</div>
<svg class="a" style="left:346px;top:1619.5px;" width="40" height="40" viewBox="0 0 40 40"><circle cx="20" cy="20" r="18.3" fill="none" stroke="#2a57c5" stroke-width="3.3"/><g fill="none" stroke="#2a57c5" stroke-width="2.2" stroke-linejoin="miter"><path d="M12.1 31.3V22.6C9.9 20.7 8.6 18.1 8.6 15.3 8.6 10.7 12.7 7.9 18.3 7.9c4.8 0 8.2 2.6 9.6 6.4l3.6 6.9h-3.8v5.7h-4.5v4.4"/><circle cx="17.9" cy="17.5" r="3.9"/><path d="M17.9 8.2v5.4"/></g><circle cx="17.9" cy="17.5" r="1" fill="#2a57c5"/></svg>
<svg class="a" style="left:413.0px;top:1622.3px;" width="36" height="36" viewBox="0 0 36 36"><circle cx="18" cy="18" r="18" fill="#3c7a2d"/><circle cx="18" cy="18" r="12.2" fill="none" stroke="#fff" stroke-width="1.5"/><circle cx="14.3" cy="15" r="1.7" fill="#fff"/><circle cx="21.7" cy="15" r="1.7" fill="#fff"/><path d="M12.3 19.8c1.5 2.5 3.4 3.7 5.7 3.7s4.2-1.2 5.7-3.7" fill="none" stroke="#fff" stroke-width="1.9" stroke-linecap="round"/></svg>
<div class="a" style="left:453.0px;top:1627.7px;font-size:25px;line-height:25px;color:#2a303b;font-weight:bold;letter-spacing:-0.706px;">I can completely understand why you&#x27;re so upset. I assure you, quickest resolution to the problem.</div>
<div class="a" style="left:150px;top:1680.5px;width:1759px;height:1px;background:#eceef1;"></div>
<div class="a" style="left:123px;top:839px;width:1808px;height:87px;background:#fff;"></div>
<svg class="a" style="left:173px;top:872px;" width="38" height="41" viewBox="0 0 38 41"><g fill="none" stroke="#2a57c5" stroke-width="3.4"><rect x="3.2" y="15.5" width="31.6" height="22.5" rx="3.5"/><path d="M10.5 15.5V11a8.5 8.5 0 0 1 17 0v4.5"/></g></svg>
<div class="a" style="left:254px;top:867px;width:576px;height:57px;background:#f4f5f7;border:1.3px solid #3d4452;border-radius:6px"></div>
<svg class="a" style="left:268px;top:881px;" width="31" height="31" viewBox="0 0 31 31"><g fill="none" stroke="#2a303b" stroke-width="2.4"><circle cx="12.5" cy="12.5" r="10.5"/><path d="M20 20l8.5 8.5" stroke-linecap="round"/></g></svg>
<div class="a" style="left:324.4px;top:884.6px;font-size:22px;line-height:22px;color:#353b46;letter-spacing:-0.784px;">Search</div>
<svg class="a" style="left:1682px;top:878px;" width="47" height="29" viewBox="0 0 47 29"><rect x="0" y="0" width="47" height="28.5" rx="5" fill="#4b5160"/><rect x="23.3" y="3.5" width="20" height="21.3" rx="0.5" fill="#fff"/><path d="M6.6 21.6l5.6-14.3 5.6 14.3M8.6 17.2h7.2" fill="none" stroke="#fff" stroke-width="3.2" stroke-linejoin="round"/><path d="M27.5 8.5h11.5M32 6.6v2.2M37.2 9c-1.8 4.6-4.8 8-9 10.4M30 14.5l6.5 5.5" fill="none" stroke="#4b5160" stroke-width="2.2"/></svg>
<svg class="a" style="left:1740px;top:887px;" width="19" height="11" viewBox="0 0 19 11"><path d="M1.5 1l8 8 8-8" fill="none" stroke="#4b5160" stroke-width="2.3"/></svg>
<svg class="a" style="left:1801px;top:871px;" width="42" height="42" viewBox="0 0 42 42"><g fill="none" stroke="#4b5160" stroke-width="3.3" stroke-linejoin="round"><path d="M12.3 12.8H6.1A2.5 2.5 0 0 0 3.6 15.3v20.1a2.5 2.5 0 0 0 2.5 2.5h15.1a2.5 2.5 0 0 0 2.5-2.5v-3.9"/><path d="M17.6 6.1a2.5 2.5 0 0 1 2.5-2.5H31l7.3 7.3v15.2a2.5 2.5 0 0 1-2.5 2.5H20.1a2.5 2.5 0 0 1-2.5-2.5z"/></g><path d="M30.5 3.6v4.9a2 2 0 0 0 2 2h5.8z" fill="#4b5160"/></svg>
<div class="a" style="left:1862px;top:872px;width:4.5px;height:47.5px;background:#dde2ea;"></div>
<svg class="a" style="left:1898px;top:872px;" width="35" height="38" viewBox="0 0 35 38"><path d="M17.5 2.5L31 7.5v10c0 8.5-5.5 15-13.5 18.5C9.5 32.5 4 26 4 17.5v-10z" fill="none" stroke="#4b5160" stroke-width="3" stroke-linejoin="round"/><circle cx="17.5" cy="15.5" r="3.4" fill="#4b5160"/><path d="M17.5 16v7.5" stroke="#4b5160" stroke-width="3" stroke-linecap="round"/></svg>
<div class="a" style="left:2546px;top:773px;width:244px;height:57.5px;background:#e0e4ec;border-radius:7px 0 0 7px"></div>
<div class="a" style="left:2792px;top:773px;width:56.6px;height:57.5px;background:#e0e4ec;border-radius:0 7px 7px 0"></div>
<div class="a" style="left:2574.5px;top:790.8px;font-size:22px;line-height:22px;color:#2a303b;font-weight:bold;letter-spacing:-1.066px;">Schedule Coaching</div>
<svg class="a" style="left:2810px;top:791px;" width="22" height="14" viewBox="0 0 22 14"><path d="M2 2l9 9 9-9" fill="none" stroke="#2a303b" stroke-width="2.4"/></svg>
<div class="a" style="left:1931px;top:926px;width:30px;height:756px;background:#f8f8f8;border-left:1px solid #e2e2e2;border-right:1px solid #e8e8e8"></div>
<div class="a" style="left:1939px;top:1374.7px;width:15.5px;height:249.3px;background:#c1c1c1;border-radius:8px"></div>
<div class="a" style="left:1966px;top:866px;width:3px;height:816px;background:#dde2ec;"></div>
<div class="a" style="left:1992px;top:866px;width:2px;height:60px;background:#dde2ec;"></div>
<div class="a" style="left:1992px;top:940px;width:2px;height:742px;background:#dde2ec;"></div>
<svg class="a" style="left:1974px;top:1264px;" width="13" height="20" viewBox="0 0 13 20"><path d="M1.5 1l10.5 9-10.5 9z" fill="#111"/></svg>
<div class="a" style="left:2012.1px;top:884.8px;font-size:26px;line-height:26px;color:#1f232a;font-weight:bold;letter-spacing:-0.444px;">AI Insights</div>
<div class="a" style="left:2177.6px;top:884.8px;font-size:26px;line-height:26px;color:#2a2e35;font-weight:bold;letter-spacing:-0.693px;">Events</div>
<div class="a" style="left:2012.3px;top:918px;width:128.7px;height:8px;background:#2a55c0;"></div>
<div class="a" style="left:1994px;top:1654px;width:827px;height:27.5px;background:#f9f9f9;border-top:1.5px solid #e3e3e3;border-bottom:1.5px solid #e6e6e6"></div>
<div class="a" style="left:2019px;top:940px;width:774px;height:714px;background:#eeeeee;border-right:2px solid #dfdfdf;border-bottom:1.5px solid #e2e2e2"></div>
<div class="a" style="left:2793px;top:940px;width:28px;height:741px;background:#f8f8f8;border-right:1.5px solid #e4e4e4"></div>
<div class="a" style="left:2799.3px;top:1174.5px;width:15.5px;height:471px;background:#c1c1c1;border-radius:8px"></div>
<div class="a" style="left:2037.6px;top:941.7px;font-size:22px;line-height:22px;color:#2a55c0;font-weight:bold;letter-spacing:-1.212px;">Show Less</div>
<svg class="a" style="left:2037px;top:986px;" width="32" height="32" viewBox="0 0 32 32"><path d="M20 1.5c1 6.5 3.5 9 10 10-6.5 1-9 3.5-10 10-1-6.5-3.5-9-10-10 6.5-1 9-3.5 10-10z" fill="#111"/><path d="M6.5 15.5c.6 3.4 2 4.8 5.4 5.4-3.4.6-4.8 2-5.4 5.4-.6-3.4-2-4.8-5.4-5.4 3.4-.6 4.8-2 5.4-5.4z" fill="#111"/><path d="M13.5 23.5c.4 2.2 1.3 3.1 3.5 3.5-2.2.4-3.1 1.3-3.5 3.5-.4-2.2-1.3-3.1-3.5-3.5 2.2-.4 3.1-1.3 3.5-3.5z" fill="#111"/></svg>
<div class="a" style="left:2074.7px;top:995.6px;font-size:25px;line-height:25px;color:#111;font-weight:bold;letter-spacing:-0.691px;">Insights</div>
<div class="a" style="left:2037.6px;top:1045.3px;font-size:23px;line-height:23px;color:#111;font-weight:bold;letter-spacing:-0.584px;">Reason for Contact</div>
<div class="a" style="left:2037.5px;top:1086.1px;font-size:24px;line-height:24px;color:#111;letter-spacing:-0.116px;">Report malfunctioning product</div>
<div class="a" style="left:2037.5px;top:1119.7px;font-size:22px;line-height:22px;color:#111;letter-spacing:-0.189px;">Vacuum cleaner not working as expected</div>
<div class="a" style="left:2037.6px;top:1167.0px;font-size:23px;line-height:23px;color:#111;font-weight:bold;letter-spacing:-0.682px;">Resolution</div>
<div class="a" style="left:2037.5px;top:1206.7px;font-size:24px;line-height:24px;color:#111;letter-spacing:-0.138px;">Ticket raised for assistance</div>
<div class="a" style="left:2037.5px;top:1239.4px;font-size:22px;line-height:22px;color:#111;letter-spacing:-0.132px;">Agent raised ticket for concerned team to fix the issue</div>
<div class="a" style="left:2037.6px;top:1287.0px;font-size:23px;line-height:23px;color:#111;font-weight:bold;letter-spacing:-0.385px;">Action Items</div>
<div class="a" style="left:2037.5px;top:1328.0px;font-size:24px;line-height:24px;color:#111;letter-spacing:-0.490px;">Follow up Needed</div>
<div class="a" style="left:2037.5px;top:1360.7px;font-size:22px;line-height:22px;color:#111;letter-spacing:-0.200px;">Agent needs to raise a ticket and concerned team will help fix the issue</div>
<div class="a" style="left:2037.6px;top:1407.5px;font-size:23px;line-height:23px;color:#111;font-weight:bold;letter-spacing:-0.500px;">Reason for Sentiment</div>
<svg class="a" style="left:2037px;top:1445px;" width="28" height="28" viewBox="0 0 28 28"><rect x="0.5" y="13" width="5.5" height="13.5" rx="1" fill="#3c7a2d"/><path d="M8.5 12.5l5.2-9c.6-1 2.1-.7 2.1.5l-.6 5.8h7.3c1.4 0 2.3 1.2 2 2.5l-2.6 10.8c-.4 1.8-1.8 3.3-3.8 3.3h-5.5c-1.8 0-3-.7-4.1-1.9" fill="none" stroke="#3c7a2d" stroke-width="2.1" stroke-linejoin="round" stroke-linecap="round"/></svg>
<div class="a" style="left:2072.5px;top:1447.2px;font-size:24px;line-height:24px;color:#111;letter-spacing:-0.243px;">Empathetic assistance</div>
<div class="a" style="left:2037.5px;top:1485.1px;font-size:22px;line-height:22px;color:#111;letter-spacing:-0.167px;">The agent&#x27;s understanding of the customer&#x27;s frustration and assurance of a</div>
<div class="a" style="left:2037.5px;top:1517.9px;font-size:22px;line-height:22px;color:#111;letter-spacing:-0.103px;">quick resolution to the problem.</div>
<svg class="a" style="left:2037px;top:1556px;" width="28" height="28" viewBox="0 0 28 28"><g transform="translate(0 28) scale(1 -1)"><rect x="0.5" y="13" width="5.5" height="13.5" rx="1" fill="#dc2e1a"/><path d="M8.5 12.5l5.2-9c.6-1 2.1-.7 2.1.5l-.6 5.8h7.3c1.4 0 2.3 1.2 2 2.5l-2.6 10.8c-.4 1.8-1.8 3.3-3.8 3.3h-5.5c-1.8 0-3-.7-4.1-1.9" fill="none" stroke="#dc2e1a" stroke-width="2.1" stroke-linejoin="round" stroke-linecap="round"/></g></svg>
<div class="a" style="left:2072.5px;top:1557.7px;font-size:24px;line-height:24px;color:#111;letter-spacing:-0.086px;">Vacuum malfunction</div>
<div class="a" style="left:2037.5px;top:1595.8px;font-size:22px;line-height:22px;color:#111;letter-spacing:-0.262px;">The vacuum cleaner they purchased is not working.</div>
<div class="a" style="left:123px;top:1640px;width:2725px;height:69px;background:linear-gradient(rgba(238,238,238,0),rgba(238,238,238,1));"></div>
</body></html>
